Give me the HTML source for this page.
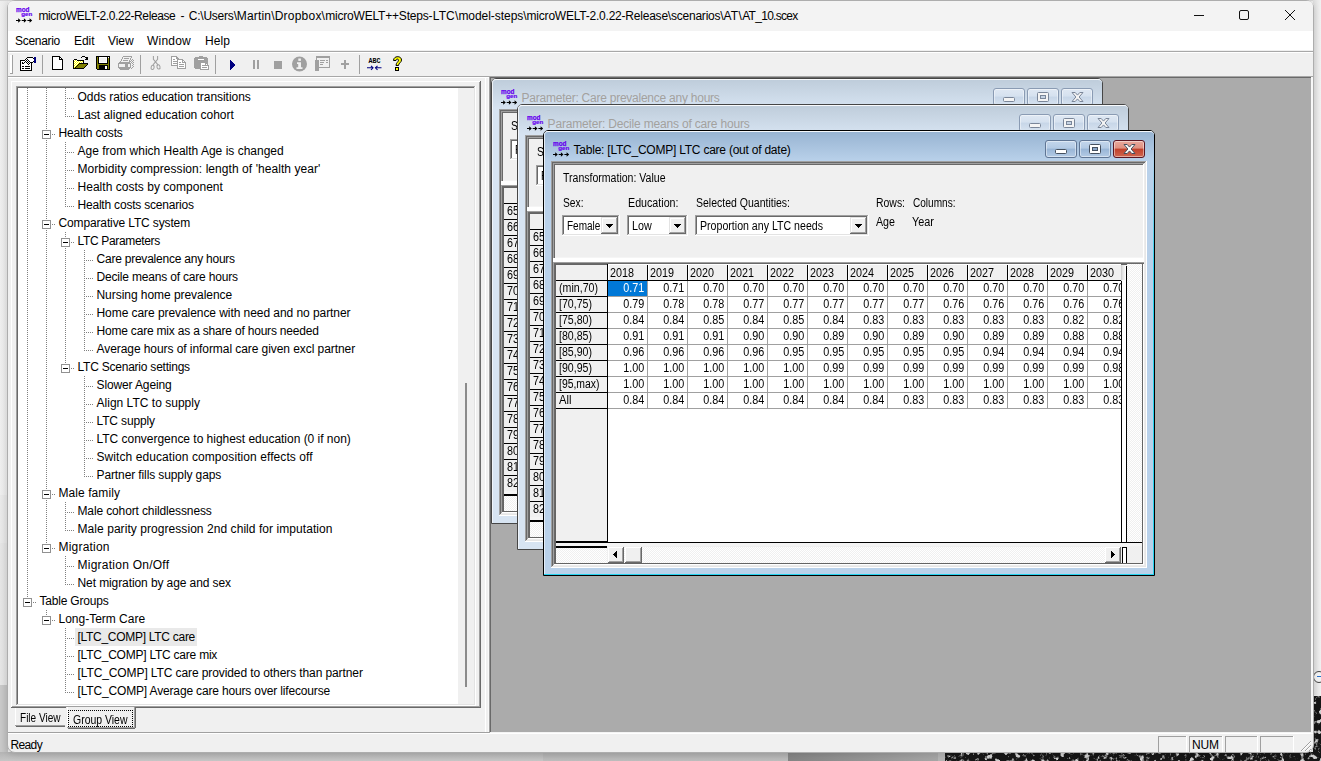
<!DOCTYPE html><html><head><meta charset="utf-8"><title>microWELT</title><style>
*{margin:0;padding:0;box-sizing:border-box}
html,body{width:1321px;height:761px;overflow:hidden}
body{position:relative;background:#ebebeb;font-family:"Liberation Sans",sans-serif;font-size:12px;color:#000}
.a{position:absolute}
.t{position:absolute;white-space:pre;line-height:14px;height:14px}
.s12{font-size:12px}
.s11{font-size:11px}
.dv{position:absolute;width:1px;background-image:linear-gradient(#808080 50%,transparent 50%);background-size:1px 2px}
.dh{position:absolute;height:1px;background-image:linear-gradient(90deg,#808080 50%,transparent 50%);background-size:2px 1px}
.box{position:absolute;width:9px;height:9px;border:1px solid #919191;background:#fff}
.box i{position:absolute;left:1px;top:3px;width:5px;height:1px;background:#000}
.dith{background-image:conic-gradient(#fff 25%,#f0f0f0 0 50%,#fff 0 75%,#f0f0f0 0);background-size:2px 2px}
</style></head><body>
<div class="a" style="left:0px;top:0px;width:8px;height:495px;background:linear-gradient(90deg,#eeeeee,#e6e6e6);"></div>
<div class="a" style="left:0px;top:495px;width:8px;height:48px;background:linear-gradient(90deg,#e9e9e9,#e0e0e0);"></div>
<div class="a" style="left:0px;top:543px;width:8px;height:142px;background:linear-gradient(90deg,#e5e5e5,#dcdcdc);"></div>
<div class="a" style="left:0px;top:685px;width:8px;height:76px;background:linear-gradient(90deg,#c9c9c9,#bdbdbd);"></div>
<div class="a" style="left:0px;top:0px;width:1321px;height:1px;background:#d6d6d6;"></div>
<div class="a" style="left:1313px;top:0px;width:8px;height:695px;background:linear-gradient(90deg,#dcdcdc,#f1f1f1);"></div>
<svg class="a" style="left:0;top:0" width="1321" height="761"><defs><filter id="nz" x="0" y="0" width="100%" height="100%"><feTurbulence type="fractalNoise" baseFrequency="0.2" numOctaves="3" seed="7" result="n"/><feColorMatrix type="matrix" values="0 0 0 0 0  0 0 0 0 0  0 0 0 0 0  4 4 0 0 -4.15" result="a"/><feFlood flood-color="#d0d0d0"/><feComposite in2="a" operator="in"/></filter></defs><rect x="1313" y="696" width="8" height="65" fill="#161616"/><rect x="945" y="752" width="376" height="9" fill="#161616"/><rect x="1313" y="696" width="8" height="65" filter="url(#nz)"/><rect x="945" y="752" width="376" height="9" filter="url(#nz)"/></svg>
<div class="a" style="left:0px;top:752px;width:543px;height:9px;background:linear-gradient(#b3b3b3,#c6c6c6);"></div>
<div class="a" style="left:543px;top:752px;width:245px;height:9px;background:linear-gradient(#adadad,#bdbdbd);"></div>
<div class="a" style="left:788px;top:752px;width:150px;height:9px;background:linear-gradient(90deg,#848484,#a6a6a6);"></div>
<div class="a" style="left:938px;top:752px;width:7px;height:9px;background:#b4b4b4;"></div>
<div class="a" style="left:1313px;top:671px;width:12px;height:12px;border:1px solid #444;border-radius:6px;background:#f3f3f3"></div>
<div class="a" style="left:1317px;top:676px;width:4px;height:1px;background:#2a6fc9;"></div>
<div class="a" style="left:7px;top:0;width:1307px;height:753px;border:1px solid #adadad;border-radius:8px;background:#f0f0f0;overflow:hidden;box-shadow:0 2px 6px rgba(0,0,0,.12)"></div>
<div class="a" style="left:8px;top:1px;width:1305px;height:30px;background:#f3f3f3;border-radius:5px 5px 0 0"></div>
<div class="a" style="left:8px;top:31px;width:1305px;height:19px;background:#fff;"></div>
<div class="a" style="left:8px;top:50px;width:1305px;height:1px;background:#f0f0f0;"></div>
<div class="a" style="left:8px;top:51px;width:1305px;height:1px;background:#a8a8a8;"></div>
<div class="a" style="left:8px;top:52px;width:1305px;height:1px;background:#fff;"></div>
<div class="a" style="left:8px;top:53px;width:1305px;height:23px;background:#f0f0f0;"></div>
<div class="a" style="left:8px;top:76px;width:1305px;height:1px;background:#a7a7a7;"></div>
<svg class="a" style="left:16px;top:7px" width="17" height="17" viewBox="0 0 17 17">
<text x="0" y="4.8" font-family="Liberation Sans" font-weight="bold" font-size="7.4" fill="#6600ee" stroke="#6600ee" stroke-width="0.25" textLength="13.5" lengthAdjust="spacingAndGlyphs">mod</text>
<text x="5.2" y="9.2" font-family="Liberation Sans" font-weight="bold" font-size="6.1" fill="#6600ee" stroke="#6600ee" stroke-width="0.2" textLength="11" lengthAdjust="spacingAndGlyphs">gen</text>
<g stroke="#000" stroke-width="1.2" fill="none"><path d="M0 13.500h3M5.700 13.500h3M11.400 13.500h3"/></g><path d="M2.200 11.300l2.600 2.200l-2.600 2.200zM7.900 11.300l2.600 2.200l-2.600 2.200zM13.600 11.300l2.600 2.200l-2.600 2.200z" fill="#000"/>
</svg>
<div class="t" style="left:38.5px;top:9.03px;font-size:12px;color:#000;letter-spacing:-0.404px;">microWELT-2.0.22-Release</div>
<div class="t" style="left:180.5px;top:9.03px;font-size:12px;color:#000;">-</div>
<div class="t" style="left:188.7px;top:9.03px;font-size:12px;color:#000;letter-spacing:-0.213px;">C:\Users\</div>
<div class="t" style="left:236.8px;top:9.03px;font-size:12px;color:#000;letter-spacing:0.173px;">Martin\</div>
<div class="t" style="left:274.7px;top:9.03px;font-size:12px;color:#000;letter-spacing:0.225px;">Dropbox\</div>
<div class="t" style="left:325.2px;top:9.03px;font-size:12px;color:#000;letter-spacing:-0.193px;">microWELT++Steps</div>
<div class="t" style="left:428.6px;top:9.03px;font-size:12px;color:#000;letter-spacing:0.138px;">-LTC\</div>
<div class="t" style="left:458.4px;top:9.03px;font-size:12px;color:#000;letter-spacing:-0.042px;">model-steps\</div>
<div class="t" style="left:526.6px;top:9.03px;font-size:12px;color:#000;letter-spacing:-0.218px;">microWELT-2.0.22-Release\</div>
<div class="t" style="left:671px;top:9.03px;font-size:12px;color:#000;letter-spacing:-0.230px;">scenarios\</div>
<div class="t" style="left:723.4px;top:9.03px;font-size:12px;color:#000;letter-spacing:0.340px;">AT\</div>
<div class="t" style="left:742.2px;top:9.03px;font-size:12px;color:#000;letter-spacing:-0.708px;">AT_10.scex</div>
<svg class="a" style="left:1190px;top:5px" width="120" height="22" viewBox="0 0 120 22" fill="none" stroke="#111" stroke-width="1"><path d="M4 10.5h10"/><rect x="49.5" y="5.5" width="9" height="9" rx="1.5"/><path d="M95 5l10 10M105 5l-10 10"/></svg>
<div class="t" style="left:15px;top:34.03px;font-size:12px;color:#000;letter-spacing:-0.297px;">Scenario</div>
<div class="t" style="left:74px;top:34.03px;font-size:12px;color:#000;letter-spacing:-0.047px;">Edit</div>
<div class="t" style="left:108px;top:34.03px;font-size:12px;color:#000;letter-spacing:-0.074px;">View</div>
<div class="t" style="left:147px;top:34.03px;font-size:12px;color:#000;letter-spacing:0.219px;">Window</div>
<div class="t" style="left:205px;top:34.03px;font-size:12px;color:#000;letter-spacing:0.078px;">Help</div>
<div class="a" style="left:10px;top:55px;width:2px;height:18px;background:#fff;"></div>
<div class="a" style="left:12px;top:55px;width:1px;height:19px;background:#a0a0a0;"></div>
<div class="a" style="left:10px;top:73px;width:2px;height:1px;background:#a0a0a0;"></div>
<div class="a" style="left:42px;top:55px;width:1px;height:19px;background:#a0a0a0;"></div>
<div class="a" style="left:140px;top:55px;width:1px;height:19px;background:#a0a0a0;"></div>
<div class="a" style="left:215px;top:55px;width:1px;height:19px;background:#a0a0a0;"></div>
<div class="a" style="left:359px;top:55px;width:1px;height:19px;background:#a0a0a0;"></div>
<svg class="a" style="left:8px;top:52px" width="420" height="24" viewBox="8 52 420 24" shape-rendering="crispEdges">
<!-- props -->
<rect x="20" y="60" width="12" height="11" fill="#000"/><rect x="21" y="61" width="10" height="9" fill="#fff"/>
<rect x="22" y="66" width="2" height="1"/><rect x="25" y="66" width="5" height="1"/><rect x="22" y="68" width="2" height="1"/><rect x="25" y="68" width="5" height="1"/><rect x="22" y="62" width="2" height="2"/>
<rect x="28" y="58" width="5" height="4" fill="#fff"/><rect x="27" y="57" width="6" height="1"/><rect x="30" y="62" width="3" height="1"/><rect x="33" y="58" width="1" height="1"/><rect x="33" y="61" width="1" height="1"/><rect x="33" y="59" width="1" height="2" fill="#fff"/>
<rect x="26" y="59" width="1" height="1" fill="#fff"/><rect x="25" y="60" width="1" height="1" fill="#fff"/><rect x="27" y="60" width="1" height="1" fill="#fff"/><rect x="26" y="61" width="1" height="1" fill="#fff"/><rect x="28" y="61" width="1" height="1" fill="#fff"/><rect x="25" y="62" width="1" height="1" fill="#fff"/><rect x="27" y="62" width="1" height="1" fill="#fff"/><rect x="28" y="63" width="1" height="1" fill="#fff"/><rect x="24" y="61" width="1" height="1" fill="#fff"/><rect x="23" y="61" width="1" height="1" fill="#fff"/><rect x="23" y="62" width="1" height="1" fill="#fff"/><rect x="26" y="58" width="1" height="1"/><rect x="25" y="59" width="1" height="1"/><rect x="27" y="59" width="1" height="1"/><rect x="24" y="60" width="1" height="1"/><rect x="26" y="60" width="1" height="1"/><rect x="28" y="60" width="1" height="1"/><rect x="25" y="61" width="1" height="1"/><rect x="27" y="61" width="1" height="1"/><rect x="29" y="61" width="1" height="1"/><rect x="24" y="62" width="1" height="1"/><rect x="26" y="62" width="1" height="1"/><rect x="28" y="62" width="1" height="1"/><rect x="27" y="63" width="1" height="1"/><rect x="29" y="63" width="1" height="1"/><rect x="28" y="64" width="1" height="1"/>
<rect x="34" y="57" width="2" height="6" fill="#000080"/>
<!-- new -->
<path d="M52.5 56.5h7l3 3v9.5h-10z" fill="#fff" stroke="#000"/>
<path d="M59.5 56.5v3h3" fill="none" stroke="#000"/>
<!-- open -->
<rect x="73" y="60" width="1" height="9" fill="#000"/><rect x="74" y="59" width="3" height="1" fill="#000"/><rect x="77" y="60" width="7" height="1" fill="#000"/><rect x="83" y="60" width="1" height="3" fill="#000"/><defs><pattern id="yd" width="2" height="2" patternUnits="userSpaceOnUse"><rect width="2" height="2" fill="#ffff00"/><rect x="0" y="0" width="1" height="1" fill="#fff"/><rect x="1" y="1" width="1" height="1" fill="#fff"/></pattern></defs><path d="M74 60h3v1h6v2h-4l-5 5z" fill="url(#yd)"/><path d="M79 64h9l-4 4h-10z" fill="#808000"/><rect x="79" y="63" width="9" height="1" fill="#000"/><rect x="87" y="64" width="1" height="1" fill="#000"/><rect x="78" y="64" width="1" height="1" fill="#000"/><rect x="86" y="65" width="1" height="1" fill="#000"/><rect x="77" y="65" width="1" height="1" fill="#000"/><rect x="85" y="66" width="1" height="1" fill="#000"/><rect x="76" y="66" width="1" height="1" fill="#000"/><rect x="84" y="67" width="1" height="1" fill="#000"/><rect x="75" y="67" width="1" height="1" fill="#000"/><rect x="73" y="68" width="11" height="1" fill="#000"/><rect x="81" y="57" width="1" height="1" fill="#000"/><rect x="82" y="56" width="3" height="1" fill="#000"/><rect x="85" y="57" width="1" height="1" fill="#000"/><rect x="86" y="57" width="2" height="3" fill="#000"/><rect x="85" y="59" width="1" height="1" fill="#000"/>
<!-- save -->
<rect x="96" y="56" width="14" height="14" fill="#000"/><rect x="97" y="57" width="12" height="12" fill="#808000"/><rect x="98" y="57" width="10" height="7" fill="#000"/><rect x="99" y="57" width="8" height="6" fill="#fff"/><rect x="100" y="58" width="6" height="4" fill="#f0f0f0"/><rect x="108" y="57" width="1" height="1" fill="#fff"/><rect x="99" y="65" width="9" height="5" fill="#000"/><rect x="105" y="66" width="2" height="3" fill="#fff"/><rect x="96" y="69" width="1" height="1" fill="#f0f0f0"/>
<!-- print (disabled) -->
<rect x="123" y="56" width="9" height="1" fill="#a0a0a0"/><rect x="122" y="57" width="1" height="1" fill="#a0a0a0"/><rect x="122" y="58" width="1" height="1" fill="#a0a0a0"/><rect x="121" y="59" width="1" height="1" fill="#a0a0a0"/><rect x="121" y="60" width="1" height="1" fill="#a0a0a0"/><rect x="120" y="61" width="1" height="1" fill="#a0a0a0"/><rect x="131" y="57" width="1" height="1" fill="#a0a0a0"/><rect x="130" y="58" width="1" height="1" fill="#a0a0a0"/><rect x="130" y="59" width="1" height="1" fill="#a0a0a0"/><rect x="129" y="60" width="1" height="1" fill="#a0a0a0"/><rect x="129" y="61" width="1" height="1" fill="#a0a0a0"/><rect x="124" y="58" width="5" height="1" fill="#a0a0a0"/><rect x="123" y="60" width="5" height="1" fill="#a0a0a0"/><rect x="119" y="62" width="11" height="1" fill="#a0a0a0"/><rect x="118" y="63" width="13" height="1" fill="#a0a0a0"/><rect x="118" y="64" width="1" height="3" fill="#a0a0a0"/><rect x="130" y="64" width="1" height="3" fill="#a0a0a0"/><rect x="118" y="67" width="13" height="1" fill="#a0a0a0"/><rect x="125" y="64" width="3" height="3" fill="#a0a0a0"/><rect x="119" y="68" width="11" height="1" fill="#a0a0a0"/><rect x="120" y="69" width="9" height="1" fill="#a0a0a0"/><rect x="130" y="61" width="1" height="1" fill="#a0a0a0"/><rect x="131" y="60" width="1" height="1" fill="#a0a0a0"/><rect x="132" y="61" width="1" height="1" fill="#a0a0a0"/><rect x="131" y="62" width="1" height="1" fill="#a0a0a0"/><rect x="132" y="63" width="1" height="1" fill="#a0a0a0"/><rect x="133" y="62" width="1" height="1" fill="#a0a0a0"/><rect x="133" y="64" width="1" height="1" fill="#a0a0a0"/><rect x="132" y="65" width="1" height="1" fill="#a0a0a0"/><rect x="133" y="66" width="1" height="1" fill="#a0a0a0"/><rect x="132" y="67" width="1" height="1" fill="#a0a0a0"/><rect x="131" y="68" width="1" height="1" fill="#a0a0a0"/><rect x="133" y="60" width="1" height="1" fill="#a0a0a0"/><rect x="132" y="59" width="1" height="1" fill="#a0a0a0"/>
<!-- cut -->
<g fill="none" stroke="#a0a0a0" shape-rendering="geometricPrecision" stroke-width="1.05"><path d="M153.400 56v3.300L158 64.800M157.600 56v3.300L153 64.800"/><ellipse cx="152.600" cy="67.400" rx="1.500" ry="2.100" transform="rotate(15 152.6 67.4)"/><ellipse cx="158.500" cy="66.900" rx="1.500" ry="2.100" transform="rotate(-15 158.5 66.9)"/></g>
<!-- copy -->
<path d="M171.500 56.500h5l2 2v7h-7z" fill="#fff" stroke="#a0a0a0"/><path d="M176.500 56.500v2h2" fill="none" stroke="#a0a0a0"/><rect x="173" y="59" width="2" height="1" fill="#a0a0a0"/><rect x="173" y="61" width="4" height="1" fill="#a0a0a0"/><rect x="173" y="63" width="4" height="1" fill="#a0a0a0"/><path d="M177.500 59.500h5l3 3v6h-8z" fill="#fff" stroke="#a0a0a0"/><path d="M182.500 59.500v3h3" fill="none" stroke="#a0a0a0"/><rect x="179" y="62" width="2" height="1" fill="#a0a0a0"/><rect x="179" y="64" width="5" height="1" fill="#a0a0a0"/><rect x="179" y="66" width="5" height="1" fill="#a0a0a0"/>
<!-- paste -->
<rect x="195" y="57" width="12" height="12" fill="#a0a0a0"/><rect x="194" y="58" width="14" height="10" fill="#a0a0a0"/><rect x="199" y="56" width="4" height="1" fill="#a0a0a0"/><rect x="198" y="59" width="6" height="1" fill="#fff"/><path d="M200.500 62.500h5l3 3v4h-8z" fill="#fff" stroke="#a0a0a0"/><path d="M205.500 62.500v3h3" fill="none" stroke="#a0a0a0"/><rect x="202" y="65" width="3" height="1" fill="#a0a0a0"/><rect x="202" y="67" width="5" height="1" fill="#a0a0a0"/>
<!-- play -->
<path d="M230 60v10l6 -5z" fill="#000080"/>
<!-- pause -->
<rect x="253" y="60" width="2" height="9" fill="#a0a0a0"/><rect x="257" y="60" width="2" height="9" fill="#a0a0a0"/>
<!-- stop -->
<rect x="274" y="61" width="8" height="8" fill="#a0a0a0"/>
</svg>
<svg class="a" style="left:288px;top:52px" width="130" height="24" viewBox="288 52 130 24">
<circle cx="299.500" cy="64" r="7.500" fill="#a0a0a0"/>
<rect x="298.300" y="58.500" width="2.600" height="2.400" fill="#f0f0f0"/><path d="M297 62.300h4v5h1.500v1.700h-6v-1.700h1.700v-3.300h-1.200z" fill="#f0f0f0"/>
<g shape-rendering="crispEdges"><rect x="316.500" y="56.500" width="13" height="11" fill="#f0f0f0" stroke="#a0a0a0"/><rect x="316" y="56" width="14" height="2" fill="#a0a0a0"/>
<rect x="315" y="60" width="4" height="11" fill="#a0a0a0"/><path d="M320 60.500h5M320 62.500h4M320 64.500h3M326 60.500h2M326 62.500h2" stroke="#a0a0a0"/><rect x="315" y="68" width="4" height="3" fill="#a0a0a0"/>
<rect x="344" y="60" width="2" height="9" fill="#a0a0a0"/><rect x="341" y="63" width="8" height="2" fill="#a0a0a0"/></g>
<text x="368.500" y="63" font-family="Liberation Mono" font-weight="bold" font-size="6.500" fill="#000" textLength="12" lengthAdjust="spacingAndGlyphs">ABC</text>
<g stroke="#000080" stroke-width="1.100" fill="none"><path d="M367 67.800h6M375.500 67.800h6"/><path d="M371 65.800l2 2l-2 2M377.500 65.800l-2 2l2 2"/></g>
<path d="M393.500 60.500c0 -5 8 -5 8 -.5c0 2.500 -3 3 -3 5.500h-2.500c0 -3 2.500 -3.500 2.500 -5.300c0 -1.500 -2.500 -1.500 -2.500 .3z" fill="#ffff00" stroke="#000" stroke-width="1"/>
<rect x="395.500" y="67.500" width="3" height="3" fill="#ffff00" stroke="#000"/>
</svg>
<div class="a" style="left:8px;top:77px;width:482px;height:1px;background:#fff;"></div>
<div class="a" style="left:11px;top:81px;width:470px;height:1px;background:#fff;"></div>
<div class="a" style="left:11px;top:81px;width:1px;height:626px;background:#fff;"></div>
<div class="a" style="left:480px;top:81px;width:1px;height:627px;background:#696969;"></div>
<div class="a" style="left:479px;top:82px;width:1px;height:625px;background:#a0a0a0;"></div>
<div class="a" style="left:11px;top:707px;width:55px;height:1px;background:#696969;"></div>
<div class="a" style="left:135px;top:707px;width:346px;height:1px;background:#696969;"></div>
<div class="a" style="left:12px;top:706px;width:468px;height:1px;background:#a0a0a0;"></div>
<div class="a" style="left:16px;top:86px;width:460px;height:620px;background:#fff;"></div>
<div class="a" style="left:16px;top:86px;width:459px;height:619px;background:#a0a0a0;"></div>
<div class="a" style="left:17px;top:87px;width:458px;height:618px;background:#e3e3e3;"></div>
<div class="a" style="left:17px;top:87px;width:457px;height:617px;background:#696969;"></div>
<div class="a" style="left:18px;top:88px;width:456px;height:616px;background:#fff;"></div>
<div class="a" style="left:485px;top:78px;width:1px;height:654px;background:#fff;"></div>
<div class="a" style="left:488px;top:78px;width:1px;height:654px;background:#f8f8f8;"></div>
<div class="a" style="left:458px;top:88px;width:16px;height:616px;background:#f0f0f0;"></div>
<div class="a" style="left:465px;top:383px;width:2px;height:304px;background:#8b8b8b;"></div>
<div class="dv" style="left:27px;top:88px;height:18px"></div>
<div class="dv" style="left:46px;top:88px;height:18px"></div>
<div class="dv" style="left:65px;top:88px;height:18px"></div>
<div class="dh" style="left:67px;top:98px;width:8px"></div>
<div class="t" style="left:77.5px;top:90.03px;font-size:12px;color:#000;letter-spacing:-0.047px;">Odds ratios education transitions</div>
<div class="dv" style="left:27px;top:106px;height:18px"></div>
<div class="dv" style="left:46px;top:106px;height:18px"></div>
<div class="dv" style="left:65px;top:106px;height:11px"></div>
<div class="dh" style="left:67px;top:116px;width:8px"></div>
<div class="t" style="left:77.5px;top:108.03px;font-size:12px;color:#000;letter-spacing:-0.017px;">Last aligned education cohort</div>
<div class="dv" style="left:27px;top:124px;height:18px"></div>
<div class="dv" style="left:46px;top:124px;height:6px"></div>
<div class="dv" style="left:46px;top:140px;height:2px"></div>
<div class="box" style="left:42px;top:130px"><i></i></div>
<div class="dh" style="left:52px;top:134px;width:4px"></div>
<div class="t" style="left:58.5px;top:126.03px;font-size:12px;color:#000;letter-spacing:-0.153px;">Health costs</div>
<div class="dv" style="left:27px;top:142px;height:18px"></div>
<div class="dv" style="left:46px;top:142px;height:18px"></div>
<div class="dv" style="left:65px;top:142px;height:18px"></div>
<div class="dh" style="left:67px;top:152px;width:8px"></div>
<div class="t" style="left:77.5px;top:144.03px;font-size:12px;color:#000;letter-spacing:0.002px;">Age from which Health Age is changed</div>
<div class="dv" style="left:27px;top:160px;height:18px"></div>
<div class="dv" style="left:46px;top:160px;height:18px"></div>
<div class="dv" style="left:65px;top:160px;height:18px"></div>
<div class="dh" style="left:67px;top:170px;width:8px"></div>
<div class="t" style="left:77.5px;top:162.03px;font-size:12px;color:#000;letter-spacing:0.062px;">Morbidity compression: length of &#x27;health year&#x27;</div>
<div class="dv" style="left:27px;top:178px;height:18px"></div>
<div class="dv" style="left:46px;top:178px;height:18px"></div>
<div class="dv" style="left:65px;top:178px;height:18px"></div>
<div class="dh" style="left:67px;top:188px;width:8px"></div>
<div class="t" style="left:77.5px;top:180.03px;font-size:12px;color:#000;letter-spacing:0.026px;">Health costs by component</div>
<div class="dv" style="left:27px;top:196px;height:18px"></div>
<div class="dv" style="left:46px;top:196px;height:18px"></div>
<div class="dv" style="left:65px;top:196px;height:11px"></div>
<div class="dh" style="left:67px;top:206px;width:8px"></div>
<div class="t" style="left:77.5px;top:198.03px;font-size:12px;color:#000;letter-spacing:-0.202px;">Health costs scenarios</div>
<div class="dv" style="left:27px;top:214px;height:18px"></div>
<div class="dv" style="left:46px;top:214px;height:6px"></div>
<div class="dv" style="left:46px;top:230px;height:2px"></div>
<div class="box" style="left:42px;top:220px"><i></i></div>
<div class="dh" style="left:52px;top:224px;width:4px"></div>
<div class="t" style="left:58.5px;top:216.03px;font-size:12px;color:#000;letter-spacing:-0.136px;">Comparative LTC system</div>
<div class="dv" style="left:27px;top:232px;height:18px"></div>
<div class="dv" style="left:46px;top:232px;height:18px"></div>
<div class="dv" style="left:65px;top:232px;height:6px"></div>
<div class="dv" style="left:65px;top:248px;height:2px"></div>
<div class="box" style="left:61px;top:238px"><i></i></div>
<div class="dh" style="left:71px;top:242px;width:4px"></div>
<div class="t" style="left:77.5px;top:234.03px;font-size:12px;color:#000;letter-spacing:-0.339px;">LTC Parameters</div>
<div class="dv" style="left:27px;top:250px;height:18px"></div>
<div class="dv" style="left:46px;top:250px;height:18px"></div>
<div class="dv" style="left:65px;top:250px;height:18px"></div>
<div class="dv" style="left:84px;top:250px;height:18px"></div>
<div class="dh" style="left:86px;top:260px;width:8px"></div>
<div class="t" style="left:96.5px;top:252.03px;font-size:12px;color:#000;letter-spacing:-0.228px;">Care prevalence any hours</div>
<div class="dv" style="left:27px;top:268px;height:18px"></div>
<div class="dv" style="left:46px;top:268px;height:18px"></div>
<div class="dv" style="left:65px;top:268px;height:18px"></div>
<div class="dv" style="left:84px;top:268px;height:18px"></div>
<div class="dh" style="left:86px;top:278px;width:8px"></div>
<div class="t" style="left:96.5px;top:270.03px;font-size:12px;color:#000;letter-spacing:-0.180px;">Decile means of care hours</div>
<div class="dv" style="left:27px;top:286px;height:18px"></div>
<div class="dv" style="left:46px;top:286px;height:18px"></div>
<div class="dv" style="left:65px;top:286px;height:18px"></div>
<div class="dv" style="left:84px;top:286px;height:18px"></div>
<div class="dh" style="left:86px;top:296px;width:8px"></div>
<div class="t" style="left:96.5px;top:288.03px;font-size:12px;color:#000;letter-spacing:-0.050px;">Nursing home prevalence</div>
<div class="dv" style="left:27px;top:304px;height:18px"></div>
<div class="dv" style="left:46px;top:304px;height:18px"></div>
<div class="dv" style="left:65px;top:304px;height:18px"></div>
<div class="dv" style="left:84px;top:304px;height:18px"></div>
<div class="dh" style="left:86px;top:314px;width:8px"></div>
<div class="t" style="left:96.5px;top:306.03px;font-size:12px;color:#000;letter-spacing:-0.063px;">Home care prevalence with need and no partner</div>
<div class="dv" style="left:27px;top:322px;height:18px"></div>
<div class="dv" style="left:46px;top:322px;height:18px"></div>
<div class="dv" style="left:65px;top:322px;height:18px"></div>
<div class="dv" style="left:84px;top:322px;height:18px"></div>
<div class="dh" style="left:86px;top:332px;width:8px"></div>
<div class="t" style="left:96.5px;top:324.03px;font-size:12px;color:#000;letter-spacing:-0.198px;">Home care mix as a share of hours needed</div>
<div class="dv" style="left:27px;top:340px;height:18px"></div>
<div class="dv" style="left:46px;top:340px;height:18px"></div>
<div class="dv" style="left:65px;top:340px;height:18px"></div>
<div class="dv" style="left:84px;top:340px;height:11px"></div>
<div class="dh" style="left:86px;top:350px;width:8px"></div>
<div class="t" style="left:96.5px;top:342.03px;font-size:12px;color:#000;letter-spacing:-0.068px;">Average hours of informal care given excl partner</div>
<div class="dv" style="left:27px;top:358px;height:18px"></div>
<div class="dv" style="left:46px;top:358px;height:18px"></div>
<div class="dv" style="left:65px;top:358px;height:6px"></div>
<div class="box" style="left:61px;top:364px"><i></i></div>
<div class="dh" style="left:71px;top:368px;width:4px"></div>
<div class="t" style="left:77.5px;top:360.03px;font-size:12px;color:#000;letter-spacing:-0.227px;">LTC Scenario settings</div>
<div class="dv" style="left:27px;top:376px;height:18px"></div>
<div class="dv" style="left:46px;top:376px;height:18px"></div>
<div class="dv" style="left:84px;top:376px;height:18px"></div>
<div class="dh" style="left:86px;top:386px;width:8px"></div>
<div class="t" style="left:96.5px;top:378.03px;font-size:12px;color:#000;letter-spacing:-0.125px;">Slower Ageing</div>
<div class="dv" style="left:27px;top:394px;height:18px"></div>
<div class="dv" style="left:46px;top:394px;height:18px"></div>
<div class="dv" style="left:84px;top:394px;height:18px"></div>
<div class="dh" style="left:86px;top:404px;width:8px"></div>
<div class="t" style="left:96.5px;top:396.03px;font-size:12px;color:#000;letter-spacing:0.017px;">Align LTC to supply</div>
<div class="dv" style="left:27px;top:412px;height:18px"></div>
<div class="dv" style="left:46px;top:412px;height:18px"></div>
<div class="dv" style="left:84px;top:412px;height:18px"></div>
<div class="dh" style="left:86px;top:422px;width:8px"></div>
<div class="t" style="left:96.5px;top:414.03px;font-size:12px;color:#000;letter-spacing:-0.141px;">LTC supply</div>
<div class="dv" style="left:27px;top:430px;height:18px"></div>
<div class="dv" style="left:46px;top:430px;height:18px"></div>
<div class="dv" style="left:84px;top:430px;height:18px"></div>
<div class="dh" style="left:86px;top:440px;width:8px"></div>
<div class="t" style="left:96.5px;top:432.03px;font-size:12px;color:#000;letter-spacing:-0.021px;">LTC convergence to highest education (0 if non)</div>
<div class="dv" style="left:27px;top:448px;height:18px"></div>
<div class="dv" style="left:46px;top:448px;height:18px"></div>
<div class="dv" style="left:84px;top:448px;height:18px"></div>
<div class="dh" style="left:86px;top:458px;width:8px"></div>
<div class="t" style="left:96.5px;top:450.03px;font-size:12px;color:#000;letter-spacing:0.080px;">Switch education composition effects off</div>
<div class="dv" style="left:27px;top:466px;height:18px"></div>
<div class="dv" style="left:46px;top:466px;height:18px"></div>
<div class="dv" style="left:84px;top:466px;height:11px"></div>
<div class="dh" style="left:86px;top:476px;width:8px"></div>
<div class="t" style="left:96.5px;top:468.03px;font-size:12px;color:#000;letter-spacing:-0.108px;">Partner fills supply gaps</div>
<div class="dv" style="left:27px;top:484px;height:18px"></div>
<div class="dv" style="left:46px;top:484px;height:6px"></div>
<div class="dv" style="left:46px;top:500px;height:2px"></div>
<div class="box" style="left:42px;top:490px"><i></i></div>
<div class="dh" style="left:52px;top:494px;width:4px"></div>
<div class="t" style="left:58.5px;top:486.03px;font-size:12px;color:#000;letter-spacing:0.074px;">Male family</div>
<div class="dv" style="left:27px;top:502px;height:18px"></div>
<div class="dv" style="left:46px;top:502px;height:18px"></div>
<div class="dv" style="left:65px;top:502px;height:18px"></div>
<div class="dh" style="left:67px;top:512px;width:8px"></div>
<div class="t" style="left:77.5px;top:504.03px;font-size:12px;color:#000;letter-spacing:-0.128px;">Male cohort childlessness</div>
<div class="dv" style="left:27px;top:520px;height:18px"></div>
<div class="dv" style="left:46px;top:520px;height:18px"></div>
<div class="dv" style="left:65px;top:520px;height:11px"></div>
<div class="dh" style="left:67px;top:530px;width:8px"></div>
<div class="t" style="left:77.5px;top:522.03px;font-size:12px;color:#000;letter-spacing:0.060px;">Male parity progression 2nd child for imputation</div>
<div class="dv" style="left:27px;top:538px;height:18px"></div>
<div class="dv" style="left:46px;top:538px;height:6px"></div>
<div class="box" style="left:42px;top:544px"><i></i></div>
<div class="dh" style="left:52px;top:548px;width:4px"></div>
<div class="t" style="left:58.5px;top:540.03px;font-size:12px;color:#000;letter-spacing:0.205px;">Migration</div>
<div class="dv" style="left:27px;top:556px;height:18px"></div>
<div class="dv" style="left:65px;top:556px;height:18px"></div>
<div class="dh" style="left:67px;top:566px;width:8px"></div>
<div class="t" style="left:77.5px;top:558.03px;font-size:12px;color:#000;letter-spacing:0.248px;">Migration On/Off</div>
<div class="dv" style="left:27px;top:574px;height:18px"></div>
<div class="dv" style="left:65px;top:574px;height:11px"></div>
<div class="dh" style="left:67px;top:584px;width:8px"></div>
<div class="t" style="left:77.5px;top:576.03px;font-size:12px;color:#000;letter-spacing:-0.093px;">Net migration by age and sex</div>
<div class="dv" style="left:27px;top:592px;height:6px"></div>
<div class="box" style="left:23px;top:598px"><i></i></div>
<div class="dh" style="left:33px;top:602px;width:4px"></div>
<div class="t" style="left:39.5px;top:594.03px;font-size:12px;color:#000;letter-spacing:-0.198px;">Table Groups</div>
<div class="dv" style="left:46px;top:610px;height:6px"></div>
<div class="box" style="left:42px;top:616px"><i></i></div>
<div class="dh" style="left:52px;top:620px;width:4px"></div>
<div class="t" style="left:58.5px;top:612.03px;font-size:12px;color:#000;letter-spacing:-0.007px;">Long-Term Care</div>
<div class="dv" style="left:65px;top:628px;height:18px"></div>
<div class="dh" style="left:67px;top:638px;width:8px"></div>
<div class="a" style="left:75px;top:628px;width:122px;height:18px;background:#e9e9e9;"></div>
<div class="t" style="left:77.5px;top:630.03px;font-size:12px;color:#000;letter-spacing:-0.285px;">[LTC_COMP] LTC care</div>
<div class="dv" style="left:65px;top:646px;height:18px"></div>
<div class="dh" style="left:67px;top:656px;width:8px"></div>
<div class="t" style="left:77.5px;top:648.03px;font-size:12px;color:#000;letter-spacing:-0.231px;">[LTC_COMP] LTC care mix</div>
<div class="dv" style="left:65px;top:664px;height:18px"></div>
<div class="dh" style="left:67px;top:674px;width:8px"></div>
<div class="t" style="left:77.5px;top:666.03px;font-size:12px;color:#000;letter-spacing:-0.099px;">[LTC_COMP] LTC care provided to others than partner</div>
<div class="dv" style="left:65px;top:682px;height:11px"></div>
<div class="dh" style="left:67px;top:692px;width:8px"></div>
<div class="t" style="left:77.5px;top:684.03px;font-size:12px;color:#000;letter-spacing:-0.159px;">[LTC_COMP] Average care hours over lifecourse</div>
<div class="a" style="left:15px;top:708px;width:1px;height:17px;background:#fff;"></div>
<div class="a" style="left:15px;top:725px;width:50px;height:1px;background:#a0a0a0;"></div>
<div class="a" style="left:16px;top:726px;width:49px;height:1px;background:#696969;"></div>
<div class="t" style="left:19.5px;top:710.83px;font-size:12px;color:#000;transform-origin:0 0;transform:scaleX(0.8356);">File View</div>
<div class="a" style="left:67px;top:707px;width:1px;height:20px;background:#fff;"></div>
<div class="a" style="left:67px;top:727px;width:68px;height:1px;background:#a0a0a0;"></div>
<div class="a" style="left:68px;top:728px;width:67px;height:1px;background:#696969;"></div>
<div class="a" style="left:134px;top:707px;width:1px;height:21px;background:#a0a0a0;"></div>
<div class="a" style="left:135px;top:708px;width:1px;height:20px;background:#696969;"></div>
<div class="a" style="left:68px;top:710px;width:65px;height:17px;border:1px dotted #000"></div>
<div class="t" style="left:72.7px;top:712.53px;font-size:12px;color:#000;transform-origin:0 0;transform:scaleX(0.8722);">Group View</div>
<div class="a" style="left:8px;top:732px;width:482px;height:1px;background:#a0a0a0;"></div>
<div class="a" style="left:8px;top:733px;width:1305px;height:1px;background:#fff;"></div>
<div class="t" style="left:10.5px;top:737.53px;font-size:12px;color:#000;letter-spacing:-0.637px;">Ready</div>
<div class="a" style="left:1158px;top:736px;width:29px;height:1px;background:#a0a0a0;"></div>
<div class="a" style="left:1158px;top:736px;width:1px;height:16px;background:#a0a0a0;"></div>
<div class="a" style="left:1186px;top:736px;width:1px;height:16px;background:#fff;"></div>
<div class="a" style="left:1189px;top:736px;width:34px;height:1px;background:#a0a0a0;"></div>
<div class="a" style="left:1189px;top:736px;width:1px;height:16px;background:#a0a0a0;"></div>
<div class="a" style="left:1222px;top:736px;width:1px;height:16px;background:#fff;"></div>
<div class="a" style="left:1225px;top:736px;width:33px;height:1px;background:#a0a0a0;"></div>
<div class="a" style="left:1225px;top:736px;width:1px;height:16px;background:#a0a0a0;"></div>
<div class="a" style="left:1257px;top:736px;width:1px;height:16px;background:#fff;"></div>
<div class="a" style="left:1260px;top:736px;width:34px;height:1px;background:#a0a0a0;"></div>
<div class="a" style="left:1260px;top:736px;width:1px;height:16px;background:#a0a0a0;"></div>
<div class="a" style="left:1293px;top:736px;width:1px;height:16px;background:#fff;"></div>
<div class="t" style="left:1192px;top:737.53px;font-size:12px;color:#000;letter-spacing:-0.109px;">NUM</div>
<svg class="a" style="left:1298px;top:738px" width="14" height="14" viewBox="0 0 14 14"><path d="M13 3L3 13M13 7L7 13M13 11L11 13" stroke="#a0a0a0" stroke-width="1"/><path d="M13 4L4 13M13 8L8 13M13 12L12 13" stroke="#fff" stroke-width="1"/></svg>
<div class="a" style="left:489px;top:77px;width:824px;height:656px;background:#a0a0a0;"></div>
<div class="a" style="left:490px;top:78px;width:823px;height:655px;background:#696969;"></div>
<div class="a" style="left:491px;top:78px;width:820px;height:654px;background:#ababab;"></div>
<div class="a" style="left:1311px;top:77px;width:2px;height:656px;background:#f8f8f8;"></div>
<div class="a" style="left:490px;top:732px;width:823px;height:1px;background:#f4f4f4;"></div>
<div class="a" style="left:490px;top:77px;width:821px;height:1px;background:#696969;"></div>
<div class="a" style="left:491px;top:78px;width:612px;height:446px;overflow:hidden;border-radius:5px 5px 0 0">
<div class="a" style="left:0;top:0;width:612px;height:446px;background:#d7e4f2;border:1px solid #464646;border-radius:5px 5px 0 0"></div>
<div class="a" style="left:1px;top:1px;width:610px;height:30px;background:linear-gradient(#bfcddb,#d7e4f2);border-radius:4px 4px 0 0;border-top:1px solid rgba(255,255,255,.85);border-left:1px solid rgba(255,255,255,.7)"></div>
<div class="a" style="left:1px;top:31px;width:1px;height:414px;background:rgba(255,255,255,.6);"></div>
<svg class="a" style="left:10px;top:11px" width="17" height="17" viewBox="0 0 17 17">
<text x="0" y="4.8" font-family="Liberation Sans" font-weight="bold" font-size="7.4" fill="#6600ee" stroke="#6600ee" stroke-width="0.25" textLength="13.5" lengthAdjust="spacingAndGlyphs">mod</text>
<text x="5.2" y="9.2" font-family="Liberation Sans" font-weight="bold" font-size="6.1" fill="#6600ee" stroke="#6600ee" stroke-width="0.2" textLength="11" lengthAdjust="spacingAndGlyphs">gen</text>
<g stroke="#000" stroke-width="1.2" fill="none"><path d="M0 13.500h3M5.700 13.500h3M11.400 13.500h3"/></g><path d="M2.200 11.300l2.600 2.200l-2.600 2.200zM7.900 11.300l2.600 2.200l-2.600 2.200zM13.600 11.300l2.600 2.200l-2.600 2.200z" fill="#000"/>
</svg>
<div class="t" style="left:30.6px;top:12.63px;font-size:12px;color:#a3a19e;letter-spacing:-0.244px;">Parameter: Care prevalence any hours</div>
<div class="a" style="left:502px;top:10px;width:32px;height:18px;border:1px solid #8a9bb3;border-radius:3px;background:linear-gradient(#dfe8f3 0,#d5e1ef 45%,#c7d6e8 50%,#d7e3f0 100%);box-shadow:inset 0 0 0 1px rgba(255,255,255,.45)"></div>
<div class="a" style="left:512px;top:19px;width:12px;height:5px;background:#f4f4f4;border:1px solid #7a8699;border-radius:1.5px"></div>
<div class="a" style="left:536px;top:10px;width:32px;height:18px;border:1px solid #8a9bb3;border-radius:3px;background:linear-gradient(#dfe8f3 0,#d5e1ef 45%,#c7d6e8 50%,#d7e3f0 100%);box-shadow:inset 0 0 0 1px rgba(255,255,255,.45)"></div>
<div class="a" style="left:546px;top:14px;width:12px;height:10px;background:#f4f4f4;border:1px solid #7a8699;border-radius:1.5px"></div>
<div class="a" style="left:549px;top:17px;width:6px;height:4px;background:#c5d3e4;border:1px solid #7a8699"></div>
<div class="a" style="left:570px;top:10px;width:32px;height:18px;border:1px solid #8a9bb3;border-radius:3px;background:linear-gradient(#dfe8f3 0,#d5e1ef 45%,#c7d6e8 50%,#d7e3f0 100%);box-shadow:inset 0 0 0 1px rgba(255,255,255,.45)"></div>
<svg class="a" style="left:578.5px;top:13px" width="15" height="12" viewBox="0 0 15 12"><path d="M2 1.500h3.200l2.300 2.600l2.300 -2.600h3.200l-3.900 4.500l3.900 4.500h-3.200l-2.300 -2.600l-2.300 2.600h-3.200l3.900 -4.500z" fill="#f4f4f4" stroke="#7a8699" stroke-width="1" stroke-linejoin="round"/></svg>
<div class="a" style="left:8px;top:31px;width:596px;height:407px;background:#fff;"></div>
<div class="a" style="left:8px;top:31px;width:595px;height:406px;background:#a0a0a0;"></div>
<div class="a" style="left:9px;top:32px;width:594px;height:405px;background:#e6e6e6;"></div>
<div class="a" style="left:9px;top:32px;width:593px;height:404px;background:#696969;"></div>
<div class="a" style="left:10px;top:33px;width:592px;height:403px;background:#ececec;"></div>
<div class="a" style="left:10px;top:33px;width:591px;height:402px;background:#a0a0a0;"></div>
<div class="a" style="left:11px;top:34px;width:590px;height:401px;background:#fff;"></div>
<div class="a" style="left:11px;top:34px;width:589px;height:400px;background:#696969;"></div>
<div class="a" style="left:12px;top:35px;width:588px;height:399px;background:#f0f0f0;"></div>
<div class="t" style="left:19.5px;top:41.03px;font-size:12px;color:#000;transform-origin:0 0;transform:scaleX(0.8536);">Sex:</div>
<div class="a" style="left:19px;top:61px;width:58px;height:21px;background:#fff;"></div>
<div class="a" style="left:19px;top:61px;width:57px;height:20px;background:#a0a0a0;"></div>
<div class="a" style="left:20px;top:62px;width:56px;height:19px;background:#e3e3e3;"></div>
<div class="a" style="left:20px;top:62px;width:55px;height:18px;background:#696969;"></div>
<div class="a" style="left:21px;top:63px;width:54px;height:17px;background:#fff;"></div>
<div class="a" style="left:58px;top:63px;width:17px;height:17px;background:#696969;"></div>
<div class="a" style="left:58px;top:63px;width:16px;height:16px;background:#e3e3e3;"></div>
<div class="a" style="left:59px;top:64px;width:15px;height:15px;background:#a0a0a0;"></div>
<div class="a" style="left:59px;top:64px;width:14px;height:14px;background:#fff;"></div>
<div class="a" style="left:60px;top:65px;width:13px;height:13px;background:#f0f0f0;"></div>
<svg class="a" style="left:63px;top:70px" width="7" height="4" viewBox="0 0 7 4" shape-rendering="crispEdges"><path d="M0 0h7l-3.500 4z" fill="#000"/></svg>
<div class="t" style="left:23.7px;top:65.03px;font-size:12px;color:#000;transform-origin:0 0;transform:scaleX(0.8347);">Female</div>
<div class="a" style="left:12px;top:102px;width:588px;height:1px;background:#f5f5f5;"></div>
<div class="a" style="left:10px;top:103px;width:591px;height:4px;background:#fff;"></div>
<div class="a" style="left:10px;top:107px;width:591px;height:1px;background:#a0a0a0;"></div>
<div class="a" style="left:11px;top:108px;width:590px;height:1px;background:#696969;"></div>
<div class="a" style="left:12px;top:109px;width:588px;height:1px;background:#646464;"></div>
<div class="a" style="left:12px;top:109px;width:1px;height:325px;background:#646464;"></div>
<div class="a" style="left:13px;top:110px;width:51px;height:302px;background:#f0f0f0;"></div>
<div class="a" style="left:65px;top:109px;width:513px;height:303px;background:#fff;"></div>
<div class="a" style="left:64px;top:109px;width:1px;height:307px;background:#000;"></div>
<div class="a" style="left:65px;top:110px;width:513px;height:15px;background:#f0f0f0;"></div>
<div class="a" style="left:13px;top:125px;width:565px;height:1px;background:#000;"></div>
<div class="a" style="left:13px;top:141px;width:51px;height:1px;background:#000;"></div>
<div class="t" style="left:15.5px;top:126.03px;font-size:12px;color:#000;transform-origin:0 0;transform:scaleX(0.8982);">65</div>
<div class="a" style="left:13px;top:157px;width:51px;height:1px;background:#000;"></div>
<div class="t" style="left:15.5px;top:142.03px;font-size:12px;color:#000;transform-origin:0 0;transform:scaleX(0.8982);">66</div>
<div class="a" style="left:13px;top:173px;width:51px;height:1px;background:#000;"></div>
<div class="t" style="left:15.5px;top:158.03px;font-size:12px;color:#000;transform-origin:0 0;transform:scaleX(0.8982);">67</div>
<div class="a" style="left:13px;top:189px;width:51px;height:1px;background:#000;"></div>
<div class="t" style="left:15.5px;top:174.03px;font-size:12px;color:#000;transform-origin:0 0;transform:scaleX(0.8982);">68</div>
<div class="a" style="left:13px;top:205px;width:51px;height:1px;background:#000;"></div>
<div class="t" style="left:15.5px;top:190.03px;font-size:12px;color:#000;transform-origin:0 0;transform:scaleX(0.8982);">69</div>
<div class="a" style="left:13px;top:221px;width:51px;height:1px;background:#000;"></div>
<div class="t" style="left:15.5px;top:206.03px;font-size:12px;color:#000;transform-origin:0 0;transform:scaleX(0.8982);">70</div>
<div class="a" style="left:13px;top:237px;width:51px;height:1px;background:#000;"></div>
<div class="t" style="left:15.5px;top:222.03px;font-size:12px;color:#000;transform-origin:0 0;transform:scaleX(0.8982);">71</div>
<div class="a" style="left:13px;top:253px;width:51px;height:1px;background:#000;"></div>
<div class="t" style="left:15.5px;top:238.03px;font-size:12px;color:#000;transform-origin:0 0;transform:scaleX(0.8982);">72</div>
<div class="a" style="left:13px;top:269px;width:51px;height:1px;background:#000;"></div>
<div class="t" style="left:15.5px;top:254.03px;font-size:12px;color:#000;transform-origin:0 0;transform:scaleX(0.8982);">73</div>
<div class="a" style="left:13px;top:285px;width:51px;height:1px;background:#000;"></div>
<div class="t" style="left:15.5px;top:270.03px;font-size:12px;color:#000;transform-origin:0 0;transform:scaleX(0.8982);">74</div>
<div class="a" style="left:13px;top:301px;width:51px;height:1px;background:#000;"></div>
<div class="t" style="left:15.5px;top:286.03px;font-size:12px;color:#000;transform-origin:0 0;transform:scaleX(0.8982);">75</div>
<div class="a" style="left:13px;top:317px;width:51px;height:1px;background:#000;"></div>
<div class="t" style="left:15.5px;top:302.03px;font-size:12px;color:#000;transform-origin:0 0;transform:scaleX(0.8982);">76</div>
<div class="a" style="left:13px;top:333px;width:51px;height:1px;background:#000;"></div>
<div class="t" style="left:15.5px;top:318.03px;font-size:12px;color:#000;transform-origin:0 0;transform:scaleX(0.8982);">77</div>
<div class="a" style="left:13px;top:349px;width:51px;height:1px;background:#000;"></div>
<div class="t" style="left:15.5px;top:334.03px;font-size:12px;color:#000;transform-origin:0 0;transform:scaleX(0.8982);">78</div>
<div class="a" style="left:13px;top:365px;width:51px;height:1px;background:#000;"></div>
<div class="t" style="left:15.5px;top:350.03px;font-size:12px;color:#000;transform-origin:0 0;transform:scaleX(0.8982);">79</div>
<div class="a" style="left:13px;top:381px;width:51px;height:1px;background:#000;"></div>
<div class="t" style="left:15.5px;top:366.03px;font-size:12px;color:#000;transform-origin:0 0;transform:scaleX(0.8982);">80</div>
<div class="a" style="left:13px;top:397px;width:51px;height:1px;background:#000;"></div>
<div class="t" style="left:15.5px;top:382.03px;font-size:12px;color:#000;transform-origin:0 0;transform:scaleX(0.8982);">81</div>
<div class="a" style="left:13px;top:413px;width:51px;height:1px;background:#000;"></div>
<div class="t" style="left:15.5px;top:398.03px;font-size:12px;color:#000;transform-origin:0 0;transform:scaleX(0.8982);">82</div>
<div class="a" style="left:578px;top:110px;width:1px;height:16px;background:#d0d0d0;"></div>
<div class="a" style="left:578px;top:126px;width:1px;height:290px;background:#000;"></div>
<div class="a" style="left:579px;top:110px;width:4px;height:306px;background:#fff;"></div>
<div class="a" style="left:579px;top:110px;width:4px;height:15px;background:linear-gradient(90deg,#dcdcdc,#fff);"></div>
<div class="a" style="left:583px;top:111px;width:1px;height:305px;background:#000;"></div>
<div class="a dith" style="left:584px;top:109px;width:15px;height:303px"></div>
<div class="a" style="left:599px;top:109px;width:1px;height:325px;background:#646464;"></div>
<div class="a" style="left:65px;top:412px;width:534px;height:1px;background:#000;"></div>
<div class="a" style="left:13px;top:413px;width:586px;height:3px;background:#f4f4f4;"></div>
<div class="a" style="left:13px;top:416px;width:51px;height:2px;background:#000;"></div>
<div class="a dith" style="left:13px;top:418px;width:51px;height:15px"></div>
<div class="a dith" style="left:65px;top:417px;width:513px;height:16px"></div>
<div class="a" style="left:65px;top:417px;width:16px;height:16px;background:#696969;"></div>
<div class="a" style="left:65px;top:417px;width:15px;height:15px;background:#fff;"></div>
<div class="a" style="left:66px;top:418px;width:14px;height:14px;background:#a0a0a0;"></div>
<div class="a" style="left:66px;top:418px;width:13px;height:13px;background:#f0f0f0;"></div>
<div class="a" style="left:82px;top:417px;width:17px;height:16px;background:#696969;"></div>
<div class="a" style="left:82px;top:417px;width:16px;height:15px;background:#fff;"></div>
<div class="a" style="left:83px;top:418px;width:15px;height:14px;background:#a0a0a0;"></div>
<div class="a" style="left:83px;top:418px;width:14px;height:13px;background:#f0f0f0;"></div>
<div class="a" style="left:562px;top:417px;width:16px;height:16px;background:#696969;"></div>
<div class="a" style="left:562px;top:417px;width:15px;height:15px;background:#fff;"></div>
<div class="a" style="left:563px;top:418px;width:14px;height:14px;background:#a0a0a0;"></div>
<div class="a" style="left:563px;top:418px;width:13px;height:13px;background:#f0f0f0;"></div>
<svg class="a" style="left:70px;top:421px" width="4" height="7" viewBox="0 0 4 7" shape-rendering="crispEdges"><path d="M4 0v7l-4 -3.500z"/></svg>
<svg class="a" style="left:568px;top:421px" width="4" height="7" viewBox="0 0 4 7" shape-rendering="crispEdges"><path d="M0 0v7l4 -3.500z"/></svg>
<div class="a" style="left:579px;top:417px;width:5px;height:16px;background:#000;"></div>
<div class="a" style="left:580px;top:418px;width:3px;height:15px;background:#fff;"></div>
<div class="a" style="left:584px;top:416px;width:15px;height:17px;background:#f0f0f0;"></div>
<div class="a" style="left:12px;top:433px;width:588px;height:1px;background:#646464;"></div>
</div>
<div class="a" style="left:517px;top:104px;width:612px;height:446px;overflow:hidden;border-radius:5px 5px 0 0">
<div class="a" style="left:0;top:0;width:612px;height:446px;background:#d7e4f2;border:1px solid #464646;border-radius:5px 5px 0 0"></div>
<div class="a" style="left:1px;top:1px;width:610px;height:30px;background:linear-gradient(#bfcddb,#d7e4f2);border-radius:4px 4px 0 0;border-top:1px solid rgba(255,255,255,.85);border-left:1px solid rgba(255,255,255,.7)"></div>
<div class="a" style="left:1px;top:31px;width:1px;height:414px;background:rgba(255,255,255,.6);"></div>
<svg class="a" style="left:10px;top:11px" width="17" height="17" viewBox="0 0 17 17">
<text x="0" y="4.8" font-family="Liberation Sans" font-weight="bold" font-size="7.4" fill="#6600ee" stroke="#6600ee" stroke-width="0.25" textLength="13.5" lengthAdjust="spacingAndGlyphs">mod</text>
<text x="5.2" y="9.2" font-family="Liberation Sans" font-weight="bold" font-size="6.1" fill="#6600ee" stroke="#6600ee" stroke-width="0.2" textLength="11" lengthAdjust="spacingAndGlyphs">gen</text>
<g stroke="#000" stroke-width="1.2" fill="none"><path d="M0 13.500h3M5.700 13.500h3M11.400 13.500h3"/></g><path d="M2.200 11.300l2.600 2.200l-2.600 2.200zM7.900 11.300l2.600 2.200l-2.600 2.200zM13.600 11.300l2.600 2.200l-2.600 2.200z" fill="#000"/>
</svg>
<div class="t" style="left:30.6px;top:12.63px;font-size:12px;color:#a3a19e;letter-spacing:-0.183px;">Parameter: Decile means of care hours</div>
<div class="a" style="left:502px;top:10px;width:32px;height:18px;border:1px solid #8a9bb3;border-radius:3px;background:linear-gradient(#dfe8f3 0,#d5e1ef 45%,#c7d6e8 50%,#d7e3f0 100%);box-shadow:inset 0 0 0 1px rgba(255,255,255,.45)"></div>
<div class="a" style="left:512px;top:19px;width:12px;height:5px;background:#f4f4f4;border:1px solid #7a8699;border-radius:1.5px"></div>
<div class="a" style="left:536px;top:10px;width:32px;height:18px;border:1px solid #8a9bb3;border-radius:3px;background:linear-gradient(#dfe8f3 0,#d5e1ef 45%,#c7d6e8 50%,#d7e3f0 100%);box-shadow:inset 0 0 0 1px rgba(255,255,255,.45)"></div>
<div class="a" style="left:546px;top:14px;width:12px;height:10px;background:#f4f4f4;border:1px solid #7a8699;border-radius:1.5px"></div>
<div class="a" style="left:549px;top:17px;width:6px;height:4px;background:#c5d3e4;border:1px solid #7a8699"></div>
<div class="a" style="left:570px;top:10px;width:32px;height:18px;border:1px solid #8a9bb3;border-radius:3px;background:linear-gradient(#dfe8f3 0,#d5e1ef 45%,#c7d6e8 50%,#d7e3f0 100%);box-shadow:inset 0 0 0 1px rgba(255,255,255,.45)"></div>
<svg class="a" style="left:578.5px;top:13px" width="15" height="12" viewBox="0 0 15 12"><path d="M2 1.500h3.200l2.300 2.600l2.300 -2.600h3.200l-3.900 4.500l3.900 4.500h-3.200l-2.300 -2.600l-2.300 2.600h-3.200l3.900 -4.500z" fill="#f4f4f4" stroke="#7a8699" stroke-width="1" stroke-linejoin="round"/></svg>
<div class="a" style="left:8px;top:31px;width:596px;height:407px;background:#fff;"></div>
<div class="a" style="left:8px;top:31px;width:595px;height:406px;background:#a0a0a0;"></div>
<div class="a" style="left:9px;top:32px;width:594px;height:405px;background:#e6e6e6;"></div>
<div class="a" style="left:9px;top:32px;width:593px;height:404px;background:#696969;"></div>
<div class="a" style="left:10px;top:33px;width:592px;height:403px;background:#ececec;"></div>
<div class="a" style="left:10px;top:33px;width:591px;height:402px;background:#a0a0a0;"></div>
<div class="a" style="left:11px;top:34px;width:590px;height:401px;background:#fff;"></div>
<div class="a" style="left:11px;top:34px;width:589px;height:400px;background:#696969;"></div>
<div class="a" style="left:12px;top:35px;width:588px;height:399px;background:#f0f0f0;"></div>
<div class="t" style="left:19.5px;top:41.03px;font-size:12px;color:#000;transform-origin:0 0;transform:scaleX(0.8536);">Sex:</div>
<div class="a" style="left:19px;top:61px;width:58px;height:21px;background:#fff;"></div>
<div class="a" style="left:19px;top:61px;width:57px;height:20px;background:#a0a0a0;"></div>
<div class="a" style="left:20px;top:62px;width:56px;height:19px;background:#e3e3e3;"></div>
<div class="a" style="left:20px;top:62px;width:55px;height:18px;background:#696969;"></div>
<div class="a" style="left:21px;top:63px;width:54px;height:17px;background:#fff;"></div>
<div class="a" style="left:58px;top:63px;width:17px;height:17px;background:#696969;"></div>
<div class="a" style="left:58px;top:63px;width:16px;height:16px;background:#e3e3e3;"></div>
<div class="a" style="left:59px;top:64px;width:15px;height:15px;background:#a0a0a0;"></div>
<div class="a" style="left:59px;top:64px;width:14px;height:14px;background:#fff;"></div>
<div class="a" style="left:60px;top:65px;width:13px;height:13px;background:#f0f0f0;"></div>
<svg class="a" style="left:63px;top:70px" width="7" height="4" viewBox="0 0 7 4" shape-rendering="crispEdges"><path d="M0 0h7l-3.500 4z" fill="#000"/></svg>
<div class="t" style="left:23.7px;top:65.03px;font-size:12px;color:#000;transform-origin:0 0;transform:scaleX(0.8347);">Female</div>
<div class="a" style="left:12px;top:102px;width:588px;height:1px;background:#f5f5f5;"></div>
<div class="a" style="left:10px;top:103px;width:591px;height:4px;background:#fff;"></div>
<div class="a" style="left:10px;top:107px;width:591px;height:1px;background:#a0a0a0;"></div>
<div class="a" style="left:11px;top:108px;width:590px;height:1px;background:#696969;"></div>
<div class="a" style="left:12px;top:109px;width:588px;height:1px;background:#646464;"></div>
<div class="a" style="left:12px;top:109px;width:1px;height:325px;background:#646464;"></div>
<div class="a" style="left:13px;top:110px;width:51px;height:302px;background:#f0f0f0;"></div>
<div class="a" style="left:65px;top:109px;width:513px;height:303px;background:#fff;"></div>
<div class="a" style="left:64px;top:109px;width:1px;height:307px;background:#000;"></div>
<div class="a" style="left:65px;top:110px;width:513px;height:15px;background:#f0f0f0;"></div>
<div class="a" style="left:13px;top:125px;width:565px;height:1px;background:#000;"></div>
<div class="a" style="left:13px;top:141px;width:51px;height:1px;background:#000;"></div>
<div class="t" style="left:15.5px;top:126.03px;font-size:12px;color:#000;transform-origin:0 0;transform:scaleX(0.8982);">65</div>
<div class="a" style="left:13px;top:157px;width:51px;height:1px;background:#000;"></div>
<div class="t" style="left:15.5px;top:142.03px;font-size:12px;color:#000;transform-origin:0 0;transform:scaleX(0.8982);">66</div>
<div class="a" style="left:13px;top:173px;width:51px;height:1px;background:#000;"></div>
<div class="t" style="left:15.5px;top:158.03px;font-size:12px;color:#000;transform-origin:0 0;transform:scaleX(0.8982);">67</div>
<div class="a" style="left:13px;top:189px;width:51px;height:1px;background:#000;"></div>
<div class="t" style="left:15.5px;top:174.03px;font-size:12px;color:#000;transform-origin:0 0;transform:scaleX(0.8982);">68</div>
<div class="a" style="left:13px;top:205px;width:51px;height:1px;background:#000;"></div>
<div class="t" style="left:15.5px;top:190.03px;font-size:12px;color:#000;transform-origin:0 0;transform:scaleX(0.8982);">69</div>
<div class="a" style="left:13px;top:221px;width:51px;height:1px;background:#000;"></div>
<div class="t" style="left:15.5px;top:206.03px;font-size:12px;color:#000;transform-origin:0 0;transform:scaleX(0.8982);">70</div>
<div class="a" style="left:13px;top:237px;width:51px;height:1px;background:#000;"></div>
<div class="t" style="left:15.5px;top:222.03px;font-size:12px;color:#000;transform-origin:0 0;transform:scaleX(0.8982);">71</div>
<div class="a" style="left:13px;top:253px;width:51px;height:1px;background:#000;"></div>
<div class="t" style="left:15.5px;top:238.03px;font-size:12px;color:#000;transform-origin:0 0;transform:scaleX(0.8982);">72</div>
<div class="a" style="left:13px;top:269px;width:51px;height:1px;background:#000;"></div>
<div class="t" style="left:15.5px;top:254.03px;font-size:12px;color:#000;transform-origin:0 0;transform:scaleX(0.8982);">73</div>
<div class="a" style="left:13px;top:285px;width:51px;height:1px;background:#000;"></div>
<div class="t" style="left:15.5px;top:270.03px;font-size:12px;color:#000;transform-origin:0 0;transform:scaleX(0.8982);">74</div>
<div class="a" style="left:13px;top:301px;width:51px;height:1px;background:#000;"></div>
<div class="t" style="left:15.5px;top:286.03px;font-size:12px;color:#000;transform-origin:0 0;transform:scaleX(0.8982);">75</div>
<div class="a" style="left:13px;top:317px;width:51px;height:1px;background:#000;"></div>
<div class="t" style="left:15.5px;top:302.03px;font-size:12px;color:#000;transform-origin:0 0;transform:scaleX(0.8982);">76</div>
<div class="a" style="left:13px;top:333px;width:51px;height:1px;background:#000;"></div>
<div class="t" style="left:15.5px;top:318.03px;font-size:12px;color:#000;transform-origin:0 0;transform:scaleX(0.8982);">77</div>
<div class="a" style="left:13px;top:349px;width:51px;height:1px;background:#000;"></div>
<div class="t" style="left:15.5px;top:334.03px;font-size:12px;color:#000;transform-origin:0 0;transform:scaleX(0.8982);">78</div>
<div class="a" style="left:13px;top:365px;width:51px;height:1px;background:#000;"></div>
<div class="t" style="left:15.5px;top:350.03px;font-size:12px;color:#000;transform-origin:0 0;transform:scaleX(0.8982);">79</div>
<div class="a" style="left:13px;top:381px;width:51px;height:1px;background:#000;"></div>
<div class="t" style="left:15.5px;top:366.03px;font-size:12px;color:#000;transform-origin:0 0;transform:scaleX(0.8982);">80</div>
<div class="a" style="left:13px;top:397px;width:51px;height:1px;background:#000;"></div>
<div class="t" style="left:15.5px;top:382.03px;font-size:12px;color:#000;transform-origin:0 0;transform:scaleX(0.8982);">81</div>
<div class="a" style="left:13px;top:413px;width:51px;height:1px;background:#000;"></div>
<div class="t" style="left:15.5px;top:398.03px;font-size:12px;color:#000;transform-origin:0 0;transform:scaleX(0.8982);">82</div>
<div class="a" style="left:578px;top:110px;width:1px;height:16px;background:#d0d0d0;"></div>
<div class="a" style="left:578px;top:126px;width:1px;height:290px;background:#000;"></div>
<div class="a" style="left:579px;top:110px;width:4px;height:306px;background:#fff;"></div>
<div class="a" style="left:579px;top:110px;width:4px;height:15px;background:linear-gradient(90deg,#dcdcdc,#fff);"></div>
<div class="a" style="left:583px;top:111px;width:1px;height:305px;background:#000;"></div>
<div class="a dith" style="left:584px;top:109px;width:15px;height:303px"></div>
<div class="a" style="left:599px;top:109px;width:1px;height:325px;background:#646464;"></div>
<div class="a" style="left:65px;top:412px;width:534px;height:1px;background:#000;"></div>
<div class="a" style="left:13px;top:413px;width:586px;height:3px;background:#f4f4f4;"></div>
<div class="a" style="left:13px;top:416px;width:51px;height:2px;background:#000;"></div>
<div class="a dith" style="left:13px;top:418px;width:51px;height:15px"></div>
<div class="a dith" style="left:65px;top:417px;width:513px;height:16px"></div>
<div class="a" style="left:65px;top:417px;width:16px;height:16px;background:#696969;"></div>
<div class="a" style="left:65px;top:417px;width:15px;height:15px;background:#fff;"></div>
<div class="a" style="left:66px;top:418px;width:14px;height:14px;background:#a0a0a0;"></div>
<div class="a" style="left:66px;top:418px;width:13px;height:13px;background:#f0f0f0;"></div>
<div class="a" style="left:82px;top:417px;width:17px;height:16px;background:#696969;"></div>
<div class="a" style="left:82px;top:417px;width:16px;height:15px;background:#fff;"></div>
<div class="a" style="left:83px;top:418px;width:15px;height:14px;background:#a0a0a0;"></div>
<div class="a" style="left:83px;top:418px;width:14px;height:13px;background:#f0f0f0;"></div>
<div class="a" style="left:562px;top:417px;width:16px;height:16px;background:#696969;"></div>
<div class="a" style="left:562px;top:417px;width:15px;height:15px;background:#fff;"></div>
<div class="a" style="left:563px;top:418px;width:14px;height:14px;background:#a0a0a0;"></div>
<div class="a" style="left:563px;top:418px;width:13px;height:13px;background:#f0f0f0;"></div>
<svg class="a" style="left:70px;top:421px" width="4" height="7" viewBox="0 0 4 7" shape-rendering="crispEdges"><path d="M4 0v7l-4 -3.500z"/></svg>
<svg class="a" style="left:568px;top:421px" width="4" height="7" viewBox="0 0 4 7" shape-rendering="crispEdges"><path d="M0 0v7l4 -3.500z"/></svg>
<div class="a" style="left:579px;top:417px;width:5px;height:16px;background:#000;"></div>
<div class="a" style="left:580px;top:418px;width:3px;height:15px;background:#fff;"></div>
<div class="a" style="left:584px;top:416px;width:15px;height:17px;background:#f0f0f0;"></div>
<div class="a" style="left:12px;top:433px;width:588px;height:1px;background:#646464;"></div>
</div>
<div class="a" style="left:543px;top:130px;width:612px;height:446px;overflow:hidden;border-radius:5px 5px 0 0">
<div class="a" style="left:0;top:0;width:612px;height:446px;background:#b9d1ea;border:1px solid #000;border-radius:5px 5px 0 0"></div>
<div class="a" style="left:1px;top:1px;width:610px;height:30px;background:linear-gradient(#98b4d2,#b9d1ea);border-radius:4px 4px 0 0;border-top:1px solid rgba(255,255,255,.85);border-left:1px solid rgba(255,255,255,.7)"></div>
<div class="a" style="left:1px;top:31px;width:1px;height:414px;background:rgba(255,255,255,.6);"></div>
<div class="a" style="left:1px;top:444px;width:610px;height:1px;background:#25d3ef;"></div>
<div class="a" style="left:610px;top:20px;width:1px;height:425px;background:linear-gradient(rgba(37,211,239,0),#25d3ef 30%)"></div>
<svg class="a" style="left:10px;top:11px" width="17" height="17" viewBox="0 0 17 17">
<text x="0" y="4.8" font-family="Liberation Sans" font-weight="bold" font-size="7.4" fill="#6600ee" stroke="#6600ee" stroke-width="0.25" textLength="13.5" lengthAdjust="spacingAndGlyphs">mod</text>
<text x="5.2" y="9.2" font-family="Liberation Sans" font-weight="bold" font-size="6.1" fill="#6600ee" stroke="#6600ee" stroke-width="0.2" textLength="11" lengthAdjust="spacingAndGlyphs">gen</text>
<g stroke="#000" stroke-width="1.2" fill="none"><path d="M0 13.500h3M5.700 13.500h3M11.400 13.500h3"/></g><path d="M2.200 11.300l2.600 2.200l-2.600 2.200zM7.900 11.300l2.600 2.200l-2.600 2.200zM13.600 11.300l2.600 2.200l-2.600 2.200z" fill="#000"/>
</svg>
<div class="t" style="left:30.6px;top:12.63px;font-size:12px;color:#000;letter-spacing:-0.233px;">Table: [LTC_COMP] LTC care (out of date)</div>
<div class="a" style="left:502px;top:10px;width:32px;height:18px;border:1px solid #5f7594;border-radius:3px;background:linear-gradient(#c3d6ec 0,#b3cae4 45%,#98b5d6 50%,#b4cbe5 100%);box-shadow:inset 0 0 0 1px rgba(255,255,255,.45)"></div>
<div class="a" style="left:512px;top:19px;width:12px;height:5px;background:#fff;border:1px solid #45505f;border-radius:1.5px"></div>
<div class="a" style="left:536px;top:10px;width:32px;height:18px;border:1px solid #5f7594;border-radius:3px;background:linear-gradient(#c3d6ec 0,#b3cae4 45%,#98b5d6 50%,#b4cbe5 100%);box-shadow:inset 0 0 0 1px rgba(255,255,255,.45)"></div>
<div class="a" style="left:546px;top:14px;width:12px;height:10px;background:#fff;border:1px solid #45505f;border-radius:1.5px"></div>
<div class="a" style="left:549px;top:17px;width:6px;height:4px;background:#8aa6c8;border:1px solid #45505f"></div>
<div class="a" style="left:570px;top:10px;width:32px;height:18px;border:1px solid #5b1622;border-radius:3px;background:linear-gradient(#e9a99c 0,#df9080 45%,#c1402a 50%,#cf6650 100%);box-shadow:inset 0 0 0 1px rgba(255,255,255,.45)"></div>
<svg class="a" style="left:578.5px;top:13px" width="15" height="12" viewBox="0 0 15 12"><path d="M2 1.500h3.200l2.300 2.600l2.300 -2.600h3.200l-3.900 4.500l3.900 4.500h-3.200l-2.300 -2.600l-2.300 2.600h-3.200l3.900 -4.500z" fill="#fff" stroke="#45505f" stroke-width="1" stroke-linejoin="round"/></svg>
<div class="a" style="left:8px;top:31px;width:596px;height:407px;background:#fff;"></div>
<div class="a" style="left:8px;top:31px;width:595px;height:406px;background:#a0a0a0;"></div>
<div class="a" style="left:9px;top:32px;width:594px;height:405px;background:#e6e6e6;"></div>
<div class="a" style="left:9px;top:32px;width:593px;height:404px;background:#696969;"></div>
<div class="a" style="left:10px;top:33px;width:592px;height:403px;background:#ececec;"></div>
<div class="a" style="left:10px;top:33px;width:591px;height:402px;background:#a0a0a0;"></div>
<div class="a" style="left:11px;top:34px;width:590px;height:401px;background:#fff;"></div>
<div class="a" style="left:11px;top:34px;width:589px;height:400px;background:#696969;"></div>
<div class="a" style="left:12px;top:35px;width:588px;height:399px;background:#f0f0f0;"></div>
<div class="t" style="left:20px;top:41.03px;font-size:12px;color:#000;transform-origin:0 0;transform:scaleX(0.8782);">Transformation: Value</div>
<div class="t" style="left:19.5px;top:66.03px;font-size:12px;color:#000;transform-origin:0 0;transform:scaleX(0.8536);">Sex:</div>
<div class="t" style="left:84.7px;top:66.03px;font-size:12px;color:#000;transform-origin:0 0;transform:scaleX(0.8904);">Education:</div>
<div class="t" style="left:152.5px;top:66.03px;font-size:12px;color:#000;transform-origin:0 0;transform:scaleX(0.8752);">Selected Quantities:</div>
<div class="t" style="left:332.6px;top:66.03px;font-size:12px;color:#000;transform-origin:0 0;transform:scaleX(0.8697);">Rows:</div>
<div class="t" style="left:370px;top:66.03px;font-size:12px;color:#000;transform-origin:0 0;transform:scaleX(0.8385);">Columns:</div>
<div class="t" style="left:333px;top:85.43px;font-size:12px;color:#000;transform-origin:0 0;transform:scaleX(0.8895);">Age</div>
<div class="t" style="left:369.3px;top:85.43px;font-size:12px;color:#000;transform-origin:0 0;transform:scaleX(0.9072);">Year</div>
<div class="a" style="left:19px;top:85px;width:58px;height:21px;background:#fff;"></div>
<div class="a" style="left:19px;top:85px;width:57px;height:20px;background:#a0a0a0;"></div>
<div class="a" style="left:20px;top:86px;width:56px;height:19px;background:#e3e3e3;"></div>
<div class="a" style="left:20px;top:86px;width:55px;height:18px;background:#696969;"></div>
<div class="a" style="left:21px;top:87px;width:54px;height:17px;background:#fff;"></div>
<div class="a" style="left:58px;top:87px;width:17px;height:17px;background:#696969;"></div>
<div class="a" style="left:58px;top:87px;width:16px;height:16px;background:#e3e3e3;"></div>
<div class="a" style="left:59px;top:88px;width:15px;height:15px;background:#a0a0a0;"></div>
<div class="a" style="left:59px;top:88px;width:14px;height:14px;background:#fff;"></div>
<div class="a" style="left:60px;top:89px;width:13px;height:13px;background:#f0f0f0;"></div>
<svg class="a" style="left:63px;top:94px" width="7" height="4" viewBox="0 0 7 4" shape-rendering="crispEdges"><path d="M0 0h7l-3.500 4z" fill="#000"/></svg>
<div class="t" style="left:23.7px;top:89.03px;font-size:12px;color:#000;transform-origin:0 0;transform:scaleX(0.8347);">Female</div>
<div class="a" style="left:84px;top:85px;width:61px;height:21px;background:#fff;"></div>
<div class="a" style="left:84px;top:85px;width:60px;height:20px;background:#a0a0a0;"></div>
<div class="a" style="left:85px;top:86px;width:59px;height:19px;background:#e3e3e3;"></div>
<div class="a" style="left:85px;top:86px;width:58px;height:18px;background:#696969;"></div>
<div class="a" style="left:86px;top:87px;width:57px;height:17px;background:#fff;"></div>
<div class="a" style="left:126px;top:87px;width:17px;height:17px;background:#696969;"></div>
<div class="a" style="left:126px;top:87px;width:16px;height:16px;background:#e3e3e3;"></div>
<div class="a" style="left:127px;top:88px;width:15px;height:15px;background:#a0a0a0;"></div>
<div class="a" style="left:127px;top:88px;width:14px;height:14px;background:#fff;"></div>
<div class="a" style="left:128px;top:89px;width:13px;height:13px;background:#f0f0f0;"></div>
<svg class="a" style="left:131px;top:94px" width="7" height="4" viewBox="0 0 7 4" shape-rendering="crispEdges"><path d="M0 0h7l-3.500 4z" fill="#000"/></svg>
<div class="t" style="left:88.7px;top:89.03px;font-size:12px;color:#000;transform-origin:0 0;transform:scaleX(0.8948);">Low</div>
<div class="a" style="left:152px;top:85px;width:174px;height:21px;background:#fff;"></div>
<div class="a" style="left:152px;top:85px;width:173px;height:20px;background:#a0a0a0;"></div>
<div class="a" style="left:153px;top:86px;width:172px;height:19px;background:#e3e3e3;"></div>
<div class="a" style="left:153px;top:86px;width:171px;height:18px;background:#696969;"></div>
<div class="a" style="left:154px;top:87px;width:170px;height:17px;background:#fff;"></div>
<div class="a" style="left:307px;top:87px;width:17px;height:17px;background:#696969;"></div>
<div class="a" style="left:307px;top:87px;width:16px;height:16px;background:#e3e3e3;"></div>
<div class="a" style="left:308px;top:88px;width:15px;height:15px;background:#a0a0a0;"></div>
<div class="a" style="left:308px;top:88px;width:14px;height:14px;background:#fff;"></div>
<div class="a" style="left:309px;top:89px;width:13px;height:13px;background:#f0f0f0;"></div>
<svg class="a" style="left:312px;top:94px" width="7" height="4" viewBox="0 0 7 4" shape-rendering="crispEdges"><path d="M0 0h7l-3.500 4z" fill="#000"/></svg>
<div class="t" style="left:156.7px;top:89.03px;font-size:12px;color:#000;transform-origin:0 0;transform:scaleX(0.8836);">Proportion any LTC needs</div>
<div class="a" style="left:12px;top:127px;width:588px;height:1px;background:#f5f5f5;"></div>
<div class="a" style="left:10px;top:128px;width:591px;height:4px;background:#fff;"></div>
<div class="a" style="left:10px;top:132px;width:591px;height:1px;background:#a0a0a0;"></div>
<div class="a" style="left:11px;top:133px;width:590px;height:1px;background:#696969;"></div>
<div class="a" style="left:12px;top:134px;width:588px;height:1px;background:#646464;"></div>
<div class="a" style="left:12px;top:134px;width:1px;height:300px;background:#646464;"></div>
<div class="a" style="left:13px;top:135px;width:51px;height:277px;background:#f0f0f0;"></div>
<div class="a" style="left:65px;top:134px;width:513px;height:278px;background:#fff;"></div>
<div class="a" style="left:64px;top:134px;width:1px;height:282px;background:#000;"></div>
<div class="a" style="left:65px;top:135px;width:513px;height:15px;background:#f0f0f0;"></div>
<div class="a" style="left:13px;top:150px;width:565px;height:1px;background:#000;"></div>
<div class="a" style="left:65px;top:134px;width:513px;height:278px;overflow:hidden">
<div class="a" style="left:39px;top:1px;width:1px;height:15px;background:#000;"></div>
<div class="a" style="left:0px;top:1px;width:1px;height:15px;background:#fff;"></div>
<div class="t" style="left:2.2px;top:2.03px;font-size:12px;color:#000;transform-origin:0 0;transform:scaleX(0.8988);">2018</div>
<div class="a" style="left:39px;top:17px;width:1px;height:128px;background:#a0a0a0;"></div>
<div class="a" style="left:79px;top:1px;width:1px;height:15px;background:#000;"></div>
<div class="a" style="left:40px;top:1px;width:1px;height:15px;background:#fff;"></div>
<div class="t" style="left:42.2px;top:2.03px;font-size:12px;color:#000;transform-origin:0 0;transform:scaleX(0.8988);">2019</div>
<div class="a" style="left:79px;top:17px;width:1px;height:128px;background:#a0a0a0;"></div>
<div class="a" style="left:119px;top:1px;width:1px;height:15px;background:#000;"></div>
<div class="a" style="left:80px;top:1px;width:1px;height:15px;background:#fff;"></div>
<div class="t" style="left:82.2px;top:2.03px;font-size:12px;color:#000;transform-origin:0 0;transform:scaleX(0.8988);">2020</div>
<div class="a" style="left:119px;top:17px;width:1px;height:128px;background:#a0a0a0;"></div>
<div class="a" style="left:159px;top:1px;width:1px;height:15px;background:#000;"></div>
<div class="a" style="left:120px;top:1px;width:1px;height:15px;background:#fff;"></div>
<div class="t" style="left:122.2px;top:2.03px;font-size:12px;color:#000;transform-origin:0 0;transform:scaleX(0.8988);">2021</div>
<div class="a" style="left:159px;top:17px;width:1px;height:128px;background:#a0a0a0;"></div>
<div class="a" style="left:199px;top:1px;width:1px;height:15px;background:#000;"></div>
<div class="a" style="left:160px;top:1px;width:1px;height:15px;background:#fff;"></div>
<div class="t" style="left:162.2px;top:2.03px;font-size:12px;color:#000;transform-origin:0 0;transform:scaleX(0.8988);">2022</div>
<div class="a" style="left:199px;top:17px;width:1px;height:128px;background:#a0a0a0;"></div>
<div class="a" style="left:239px;top:1px;width:1px;height:15px;background:#000;"></div>
<div class="a" style="left:200px;top:1px;width:1px;height:15px;background:#fff;"></div>
<div class="t" style="left:202.2px;top:2.03px;font-size:12px;color:#000;transform-origin:0 0;transform:scaleX(0.8988);">2023</div>
<div class="a" style="left:239px;top:17px;width:1px;height:128px;background:#a0a0a0;"></div>
<div class="a" style="left:279px;top:1px;width:1px;height:15px;background:#000;"></div>
<div class="a" style="left:240px;top:1px;width:1px;height:15px;background:#fff;"></div>
<div class="t" style="left:242.2px;top:2.03px;font-size:12px;color:#000;transform-origin:0 0;transform:scaleX(0.8988);">2024</div>
<div class="a" style="left:279px;top:17px;width:1px;height:128px;background:#a0a0a0;"></div>
<div class="a" style="left:319px;top:1px;width:1px;height:15px;background:#000;"></div>
<div class="a" style="left:280px;top:1px;width:1px;height:15px;background:#fff;"></div>
<div class="t" style="left:282.2px;top:2.03px;font-size:12px;color:#000;transform-origin:0 0;transform:scaleX(0.8988);">2025</div>
<div class="a" style="left:319px;top:17px;width:1px;height:128px;background:#a0a0a0;"></div>
<div class="a" style="left:359px;top:1px;width:1px;height:15px;background:#000;"></div>
<div class="a" style="left:320px;top:1px;width:1px;height:15px;background:#fff;"></div>
<div class="t" style="left:322.2px;top:2.03px;font-size:12px;color:#000;transform-origin:0 0;transform:scaleX(0.8988);">2026</div>
<div class="a" style="left:359px;top:17px;width:1px;height:128px;background:#a0a0a0;"></div>
<div class="a" style="left:399px;top:1px;width:1px;height:15px;background:#000;"></div>
<div class="a" style="left:360px;top:1px;width:1px;height:15px;background:#fff;"></div>
<div class="t" style="left:362.2px;top:2.03px;font-size:12px;color:#000;transform-origin:0 0;transform:scaleX(0.8988);">2027</div>
<div class="a" style="left:399px;top:17px;width:1px;height:128px;background:#a0a0a0;"></div>
<div class="a" style="left:439px;top:1px;width:1px;height:15px;background:#000;"></div>
<div class="a" style="left:400px;top:1px;width:1px;height:15px;background:#fff;"></div>
<div class="t" style="left:402.2px;top:2.03px;font-size:12px;color:#000;transform-origin:0 0;transform:scaleX(0.8988);">2028</div>
<div class="a" style="left:439px;top:17px;width:1px;height:128px;background:#a0a0a0;"></div>
<div class="a" style="left:479px;top:1px;width:1px;height:15px;background:#000;"></div>
<div class="a" style="left:440px;top:1px;width:1px;height:15px;background:#fff;"></div>
<div class="t" style="left:442.2px;top:2.03px;font-size:12px;color:#000;transform-origin:0 0;transform:scaleX(0.8988);">2029</div>
<div class="a" style="left:479px;top:17px;width:1px;height:128px;background:#a0a0a0;"></div>
<div class="a" style="left:519px;top:1px;width:1px;height:15px;background:#000;"></div>
<div class="a" style="left:480px;top:1px;width:1px;height:15px;background:#fff;"></div>
<div class="t" style="left:482.2px;top:2.03px;font-size:12px;color:#000;transform-origin:0 0;transform:scaleX(0.8988);">2030</div>
<div class="a" style="left:519px;top:17px;width:1px;height:128px;background:#a0a0a0;"></div>
<div class="a" style="left:0px;top:32px;width:513px;height:1px;background:#a0a0a0;"></div>
<div class="a" style="left:0px;top:17px;width:39px;height:15px;background:#0078d7;"></div>
<div class="t" style="right:477px;top:17.03px;font-size:12px;color:#fff;transform-origin:100% 0;transform:scaleX(0.9000);">0.71</div>
<div class="t" style="right:437px;top:17.03px;font-size:12px;color:#000;transform-origin:100% 0;transform:scaleX(0.9000);">0.71</div>
<div class="t" style="right:397px;top:17.03px;font-size:12px;color:#000;transform-origin:100% 0;transform:scaleX(0.9000);">0.70</div>
<div class="t" style="right:357px;top:17.03px;font-size:12px;color:#000;transform-origin:100% 0;transform:scaleX(0.9000);">0.70</div>
<div class="t" style="right:317px;top:17.03px;font-size:12px;color:#000;transform-origin:100% 0;transform:scaleX(0.9000);">0.70</div>
<div class="t" style="right:277px;top:17.03px;font-size:12px;color:#000;transform-origin:100% 0;transform:scaleX(0.9000);">0.70</div>
<div class="t" style="right:237px;top:17.03px;font-size:12px;color:#000;transform-origin:100% 0;transform:scaleX(0.9000);">0.70</div>
<div class="t" style="right:197px;top:17.03px;font-size:12px;color:#000;transform-origin:100% 0;transform:scaleX(0.9000);">0.70</div>
<div class="t" style="right:157px;top:17.03px;font-size:12px;color:#000;transform-origin:100% 0;transform:scaleX(0.9000);">0.70</div>
<div class="t" style="right:117px;top:17.03px;font-size:12px;color:#000;transform-origin:100% 0;transform:scaleX(0.9000);">0.70</div>
<div class="t" style="right:77px;top:17.03px;font-size:12px;color:#000;transform-origin:100% 0;transform:scaleX(0.9000);">0.70</div>
<div class="t" style="right:37px;top:17.03px;font-size:12px;color:#000;transform-origin:100% 0;transform:scaleX(0.9000);">0.70</div>
<div class="t" style="right:-3px;top:17.03px;font-size:12px;color:#000;transform-origin:100% 0;transform:scaleX(0.9000);">0.70</div>
<div class="a" style="left:0px;top:48px;width:513px;height:1px;background:#a0a0a0;"></div>
<div class="t" style="right:477px;top:33.03px;font-size:12px;color:#000;transform-origin:100% 0;transform:scaleX(0.9000);">0.79</div>
<div class="t" style="right:437px;top:33.03px;font-size:12px;color:#000;transform-origin:100% 0;transform:scaleX(0.9000);">0.78</div>
<div class="t" style="right:397px;top:33.03px;font-size:12px;color:#000;transform-origin:100% 0;transform:scaleX(0.9000);">0.78</div>
<div class="t" style="right:357px;top:33.03px;font-size:12px;color:#000;transform-origin:100% 0;transform:scaleX(0.9000);">0.77</div>
<div class="t" style="right:317px;top:33.03px;font-size:12px;color:#000;transform-origin:100% 0;transform:scaleX(0.9000);">0.77</div>
<div class="t" style="right:277px;top:33.03px;font-size:12px;color:#000;transform-origin:100% 0;transform:scaleX(0.9000);">0.77</div>
<div class="t" style="right:237px;top:33.03px;font-size:12px;color:#000;transform-origin:100% 0;transform:scaleX(0.9000);">0.77</div>
<div class="t" style="right:197px;top:33.03px;font-size:12px;color:#000;transform-origin:100% 0;transform:scaleX(0.9000);">0.77</div>
<div class="t" style="right:157px;top:33.03px;font-size:12px;color:#000;transform-origin:100% 0;transform:scaleX(0.9000);">0.76</div>
<div class="t" style="right:117px;top:33.03px;font-size:12px;color:#000;transform-origin:100% 0;transform:scaleX(0.9000);">0.76</div>
<div class="t" style="right:77px;top:33.03px;font-size:12px;color:#000;transform-origin:100% 0;transform:scaleX(0.9000);">0.76</div>
<div class="t" style="right:37px;top:33.03px;font-size:12px;color:#000;transform-origin:100% 0;transform:scaleX(0.9000);">0.76</div>
<div class="t" style="right:-3px;top:33.03px;font-size:12px;color:#000;transform-origin:100% 0;transform:scaleX(0.9000);">0.76</div>
<div class="a" style="left:0px;top:64px;width:513px;height:1px;background:#a0a0a0;"></div>
<div class="t" style="right:477px;top:49.03px;font-size:12px;color:#000;transform-origin:100% 0;transform:scaleX(0.9000);">0.84</div>
<div class="t" style="right:437px;top:49.03px;font-size:12px;color:#000;transform-origin:100% 0;transform:scaleX(0.9000);">0.84</div>
<div class="t" style="right:397px;top:49.03px;font-size:12px;color:#000;transform-origin:100% 0;transform:scaleX(0.9000);">0.85</div>
<div class="t" style="right:357px;top:49.03px;font-size:12px;color:#000;transform-origin:100% 0;transform:scaleX(0.9000);">0.84</div>
<div class="t" style="right:317px;top:49.03px;font-size:12px;color:#000;transform-origin:100% 0;transform:scaleX(0.9000);">0.85</div>
<div class="t" style="right:277px;top:49.03px;font-size:12px;color:#000;transform-origin:100% 0;transform:scaleX(0.9000);">0.84</div>
<div class="t" style="right:237px;top:49.03px;font-size:12px;color:#000;transform-origin:100% 0;transform:scaleX(0.9000);">0.83</div>
<div class="t" style="right:197px;top:49.03px;font-size:12px;color:#000;transform-origin:100% 0;transform:scaleX(0.9000);">0.83</div>
<div class="t" style="right:157px;top:49.03px;font-size:12px;color:#000;transform-origin:100% 0;transform:scaleX(0.9000);">0.83</div>
<div class="t" style="right:117px;top:49.03px;font-size:12px;color:#000;transform-origin:100% 0;transform:scaleX(0.9000);">0.83</div>
<div class="t" style="right:77px;top:49.03px;font-size:12px;color:#000;transform-origin:100% 0;transform:scaleX(0.9000);">0.83</div>
<div class="t" style="right:37px;top:49.03px;font-size:12px;color:#000;transform-origin:100% 0;transform:scaleX(0.9000);">0.82</div>
<div class="t" style="right:-3px;top:49.03px;font-size:12px;color:#000;transform-origin:100% 0;transform:scaleX(0.9000);">0.82</div>
<div class="a" style="left:0px;top:80px;width:513px;height:1px;background:#a0a0a0;"></div>
<div class="t" style="right:477px;top:65.03px;font-size:12px;color:#000;transform-origin:100% 0;transform:scaleX(0.9000);">0.91</div>
<div class="t" style="right:437px;top:65.03px;font-size:12px;color:#000;transform-origin:100% 0;transform:scaleX(0.9000);">0.91</div>
<div class="t" style="right:397px;top:65.03px;font-size:12px;color:#000;transform-origin:100% 0;transform:scaleX(0.9000);">0.91</div>
<div class="t" style="right:357px;top:65.03px;font-size:12px;color:#000;transform-origin:100% 0;transform:scaleX(0.9000);">0.90</div>
<div class="t" style="right:317px;top:65.03px;font-size:12px;color:#000;transform-origin:100% 0;transform:scaleX(0.9000);">0.90</div>
<div class="t" style="right:277px;top:65.03px;font-size:12px;color:#000;transform-origin:100% 0;transform:scaleX(0.9000);">0.89</div>
<div class="t" style="right:237px;top:65.03px;font-size:12px;color:#000;transform-origin:100% 0;transform:scaleX(0.9000);">0.90</div>
<div class="t" style="right:197px;top:65.03px;font-size:12px;color:#000;transform-origin:100% 0;transform:scaleX(0.9000);">0.89</div>
<div class="t" style="right:157px;top:65.03px;font-size:12px;color:#000;transform-origin:100% 0;transform:scaleX(0.9000);">0.90</div>
<div class="t" style="right:117px;top:65.03px;font-size:12px;color:#000;transform-origin:100% 0;transform:scaleX(0.9000);">0.89</div>
<div class="t" style="right:77px;top:65.03px;font-size:12px;color:#000;transform-origin:100% 0;transform:scaleX(0.9000);">0.89</div>
<div class="t" style="right:37px;top:65.03px;font-size:12px;color:#000;transform-origin:100% 0;transform:scaleX(0.9000);">0.88</div>
<div class="t" style="right:-3px;top:65.03px;font-size:12px;color:#000;transform-origin:100% 0;transform:scaleX(0.9000);">0.88</div>
<div class="a" style="left:0px;top:96px;width:513px;height:1px;background:#a0a0a0;"></div>
<div class="t" style="right:477px;top:81.03px;font-size:12px;color:#000;transform-origin:100% 0;transform:scaleX(0.9000);">0.96</div>
<div class="t" style="right:437px;top:81.03px;font-size:12px;color:#000;transform-origin:100% 0;transform:scaleX(0.9000);">0.96</div>
<div class="t" style="right:397px;top:81.03px;font-size:12px;color:#000;transform-origin:100% 0;transform:scaleX(0.9000);">0.96</div>
<div class="t" style="right:357px;top:81.03px;font-size:12px;color:#000;transform-origin:100% 0;transform:scaleX(0.9000);">0.96</div>
<div class="t" style="right:317px;top:81.03px;font-size:12px;color:#000;transform-origin:100% 0;transform:scaleX(0.9000);">0.95</div>
<div class="t" style="right:277px;top:81.03px;font-size:12px;color:#000;transform-origin:100% 0;transform:scaleX(0.9000);">0.95</div>
<div class="t" style="right:237px;top:81.03px;font-size:12px;color:#000;transform-origin:100% 0;transform:scaleX(0.9000);">0.95</div>
<div class="t" style="right:197px;top:81.03px;font-size:12px;color:#000;transform-origin:100% 0;transform:scaleX(0.9000);">0.95</div>
<div class="t" style="right:157px;top:81.03px;font-size:12px;color:#000;transform-origin:100% 0;transform:scaleX(0.9000);">0.95</div>
<div class="t" style="right:117px;top:81.03px;font-size:12px;color:#000;transform-origin:100% 0;transform:scaleX(0.9000);">0.94</div>
<div class="t" style="right:77px;top:81.03px;font-size:12px;color:#000;transform-origin:100% 0;transform:scaleX(0.9000);">0.94</div>
<div class="t" style="right:37px;top:81.03px;font-size:12px;color:#000;transform-origin:100% 0;transform:scaleX(0.9000);">0.94</div>
<div class="t" style="right:-3px;top:81.03px;font-size:12px;color:#000;transform-origin:100% 0;transform:scaleX(0.9000);">0.94</div>
<div class="a" style="left:0px;top:112px;width:513px;height:1px;background:#a0a0a0;"></div>
<div class="t" style="right:477px;top:97.03px;font-size:12px;color:#000;transform-origin:100% 0;transform:scaleX(0.9000);">1.00</div>
<div class="t" style="right:437px;top:97.03px;font-size:12px;color:#000;transform-origin:100% 0;transform:scaleX(0.9000);">1.00</div>
<div class="t" style="right:397px;top:97.03px;font-size:12px;color:#000;transform-origin:100% 0;transform:scaleX(0.9000);">1.00</div>
<div class="t" style="right:357px;top:97.03px;font-size:12px;color:#000;transform-origin:100% 0;transform:scaleX(0.9000);">1.00</div>
<div class="t" style="right:317px;top:97.03px;font-size:12px;color:#000;transform-origin:100% 0;transform:scaleX(0.9000);">1.00</div>
<div class="t" style="right:277px;top:97.03px;font-size:12px;color:#000;transform-origin:100% 0;transform:scaleX(0.9000);">0.99</div>
<div class="t" style="right:237px;top:97.03px;font-size:12px;color:#000;transform-origin:100% 0;transform:scaleX(0.9000);">0.99</div>
<div class="t" style="right:197px;top:97.03px;font-size:12px;color:#000;transform-origin:100% 0;transform:scaleX(0.9000);">0.99</div>
<div class="t" style="right:157px;top:97.03px;font-size:12px;color:#000;transform-origin:100% 0;transform:scaleX(0.9000);">0.99</div>
<div class="t" style="right:117px;top:97.03px;font-size:12px;color:#000;transform-origin:100% 0;transform:scaleX(0.9000);">0.99</div>
<div class="t" style="right:77px;top:97.03px;font-size:12px;color:#000;transform-origin:100% 0;transform:scaleX(0.9000);">0.99</div>
<div class="t" style="right:37px;top:97.03px;font-size:12px;color:#000;transform-origin:100% 0;transform:scaleX(0.9000);">0.99</div>
<div class="t" style="right:-3px;top:97.03px;font-size:12px;color:#000;transform-origin:100% 0;transform:scaleX(0.9000);">0.98</div>
<div class="a" style="left:0px;top:128px;width:513px;height:1px;background:#a0a0a0;"></div>
<div class="t" style="right:477px;top:113.03px;font-size:12px;color:#000;transform-origin:100% 0;transform:scaleX(0.9000);">1.00</div>
<div class="t" style="right:437px;top:113.03px;font-size:12px;color:#000;transform-origin:100% 0;transform:scaleX(0.9000);">1.00</div>
<div class="t" style="right:397px;top:113.03px;font-size:12px;color:#000;transform-origin:100% 0;transform:scaleX(0.9000);">1.00</div>
<div class="t" style="right:357px;top:113.03px;font-size:12px;color:#000;transform-origin:100% 0;transform:scaleX(0.9000);">1.00</div>
<div class="t" style="right:317px;top:113.03px;font-size:12px;color:#000;transform-origin:100% 0;transform:scaleX(0.9000);">1.00</div>
<div class="t" style="right:277px;top:113.03px;font-size:12px;color:#000;transform-origin:100% 0;transform:scaleX(0.9000);">1.00</div>
<div class="t" style="right:237px;top:113.03px;font-size:12px;color:#000;transform-origin:100% 0;transform:scaleX(0.9000);">1.00</div>
<div class="t" style="right:197px;top:113.03px;font-size:12px;color:#000;transform-origin:100% 0;transform:scaleX(0.9000);">1.00</div>
<div class="t" style="right:157px;top:113.03px;font-size:12px;color:#000;transform-origin:100% 0;transform:scaleX(0.9000);">1.00</div>
<div class="t" style="right:117px;top:113.03px;font-size:12px;color:#000;transform-origin:100% 0;transform:scaleX(0.9000);">1.00</div>
<div class="t" style="right:77px;top:113.03px;font-size:12px;color:#000;transform-origin:100% 0;transform:scaleX(0.9000);">1.00</div>
<div class="t" style="right:37px;top:113.03px;font-size:12px;color:#000;transform-origin:100% 0;transform:scaleX(0.9000);">1.00</div>
<div class="t" style="right:-3px;top:113.03px;font-size:12px;color:#000;transform-origin:100% 0;transform:scaleX(0.9000);">1.00</div>
<div class="a" style="left:0px;top:144px;width:513px;height:1px;background:#a0a0a0;"></div>
<div class="t" style="right:477px;top:129.03px;font-size:12px;color:#000;transform-origin:100% 0;transform:scaleX(0.9000);">0.84</div>
<div class="t" style="right:437px;top:129.03px;font-size:12px;color:#000;transform-origin:100% 0;transform:scaleX(0.9000);">0.84</div>
<div class="t" style="right:397px;top:129.03px;font-size:12px;color:#000;transform-origin:100% 0;transform:scaleX(0.9000);">0.84</div>
<div class="t" style="right:357px;top:129.03px;font-size:12px;color:#000;transform-origin:100% 0;transform:scaleX(0.9000);">0.84</div>
<div class="t" style="right:317px;top:129.03px;font-size:12px;color:#000;transform-origin:100% 0;transform:scaleX(0.9000);">0.84</div>
<div class="t" style="right:277px;top:129.03px;font-size:12px;color:#000;transform-origin:100% 0;transform:scaleX(0.9000);">0.84</div>
<div class="t" style="right:237px;top:129.03px;font-size:12px;color:#000;transform-origin:100% 0;transform:scaleX(0.9000);">0.84</div>
<div class="t" style="right:197px;top:129.03px;font-size:12px;color:#000;transform-origin:100% 0;transform:scaleX(0.9000);">0.83</div>
<div class="t" style="right:157px;top:129.03px;font-size:12px;color:#000;transform-origin:100% 0;transform:scaleX(0.9000);">0.83</div>
<div class="t" style="right:117px;top:129.03px;font-size:12px;color:#000;transform-origin:100% 0;transform:scaleX(0.9000);">0.83</div>
<div class="t" style="right:77px;top:129.03px;font-size:12px;color:#000;transform-origin:100% 0;transform:scaleX(0.9000);">0.83</div>
<div class="t" style="right:37px;top:129.03px;font-size:12px;color:#000;transform-origin:100% 0;transform:scaleX(0.9000);">0.83</div>
<div class="t" style="right:-3px;top:129.03px;font-size:12px;color:#000;transform-origin:100% 0;transform:scaleX(0.9000);">0.83</div>
</div>
<div class="a" style="left:13px;top:166px;width:51px;height:1px;background:#000;"></div>
<div class="t" style="left:15.5px;top:151.03px;font-size:12px;color:#000;transform-origin:0 0;transform:scaleX(0.8860);">(min,70)</div>
<div class="a" style="left:13px;top:182px;width:51px;height:1px;background:#000;"></div>
<div class="t" style="left:15.5px;top:167.03px;font-size:12px;color:#000;transform-origin:0 0;transform:scaleX(0.8833);">[70,75)</div>
<div class="a" style="left:13px;top:198px;width:51px;height:1px;background:#000;"></div>
<div class="t" style="left:15.5px;top:183.03px;font-size:12px;color:#000;transform-origin:0 0;transform:scaleX(0.8833);">[75,80)</div>
<div class="a" style="left:13px;top:214px;width:51px;height:1px;background:#000;"></div>
<div class="t" style="left:15.5px;top:199.03px;font-size:12px;color:#000;transform-origin:0 0;transform:scaleX(0.8833);">[80,85)</div>
<div class="a" style="left:13px;top:230px;width:51px;height:1px;background:#000;"></div>
<div class="t" style="left:15.5px;top:215.03px;font-size:12px;color:#000;transform-origin:0 0;transform:scaleX(0.8833);">[85,90)</div>
<div class="a" style="left:13px;top:246px;width:51px;height:1px;background:#000;"></div>
<div class="t" style="left:15.5px;top:231.03px;font-size:12px;color:#000;transform-origin:0 0;transform:scaleX(0.8833);">[90,95)</div>
<div class="a" style="left:13px;top:262px;width:51px;height:1px;background:#000;"></div>
<div class="t" style="left:15.5px;top:247.03px;font-size:12px;color:#000;transform-origin:0 0;transform:scaleX(0.8675);">[95,max)</div>
<div class="a" style="left:13px;top:278px;width:51px;height:1px;background:#000;"></div>
<div class="t" style="left:15.5px;top:263.03px;font-size:12px;color:#000;transform-origin:0 0;transform:scaleX(0.9368);">All</div>
<div class="a" style="left:578px;top:135px;width:1px;height:16px;background:#d0d0d0;"></div>
<div class="a" style="left:578px;top:151px;width:1px;height:265px;background:#000;"></div>
<div class="a" style="left:579px;top:135px;width:4px;height:281px;background:#fff;"></div>
<div class="a" style="left:579px;top:135px;width:4px;height:15px;background:linear-gradient(90deg,#dcdcdc,#fff);"></div>
<div class="a" style="left:583px;top:136px;width:1px;height:280px;background:#000;"></div>
<div class="a dith" style="left:584px;top:134px;width:15px;height:278px"></div>
<div class="a" style="left:599px;top:134px;width:1px;height:300px;background:#646464;"></div>
<div class="a" style="left:13px;top:411px;width:51px;height:2px;background:#000;"></div>
<div class="a" style="left:65px;top:412px;width:534px;height:1px;background:#000;"></div>
<div class="a" style="left:13px;top:413px;width:586px;height:3px;background:#f4f4f4;"></div>
<div class="a" style="left:13px;top:416px;width:51px;height:2px;background:#000;"></div>
<div class="a dith" style="left:13px;top:418px;width:51px;height:15px"></div>
<div class="a dith" style="left:65px;top:417px;width:513px;height:16px"></div>
<div class="a" style="left:65px;top:417px;width:16px;height:16px;background:#696969;"></div>
<div class="a" style="left:65px;top:417px;width:15px;height:15px;background:#fff;"></div>
<div class="a" style="left:66px;top:418px;width:14px;height:14px;background:#a0a0a0;"></div>
<div class="a" style="left:66px;top:418px;width:13px;height:13px;background:#f0f0f0;"></div>
<div class="a" style="left:82px;top:417px;width:17px;height:16px;background:#696969;"></div>
<div class="a" style="left:82px;top:417px;width:16px;height:15px;background:#fff;"></div>
<div class="a" style="left:83px;top:418px;width:15px;height:14px;background:#a0a0a0;"></div>
<div class="a" style="left:83px;top:418px;width:14px;height:13px;background:#f0f0f0;"></div>
<div class="a" style="left:562px;top:417px;width:16px;height:16px;background:#696969;"></div>
<div class="a" style="left:562px;top:417px;width:15px;height:15px;background:#fff;"></div>
<div class="a" style="left:563px;top:418px;width:14px;height:14px;background:#a0a0a0;"></div>
<div class="a" style="left:563px;top:418px;width:13px;height:13px;background:#f0f0f0;"></div>
<svg class="a" style="left:70px;top:421px" width="4" height="7" viewBox="0 0 4 7" shape-rendering="crispEdges"><path d="M4 0v7l-4 -3.500z"/></svg>
<svg class="a" style="left:568px;top:421px" width="4" height="7" viewBox="0 0 4 7" shape-rendering="crispEdges"><path d="M0 0v7l4 -3.500z"/></svg>
<div class="a" style="left:579px;top:417px;width:5px;height:16px;background:#000;"></div>
<div class="a" style="left:580px;top:418px;width:3px;height:15px;background:#fff;"></div>
<div class="a" style="left:584px;top:416px;width:15px;height:17px;background:#f0f0f0;"></div>
<div class="a" style="left:12px;top:433px;width:588px;height:1px;background:#646464;"></div>
</div>
</body></html>
